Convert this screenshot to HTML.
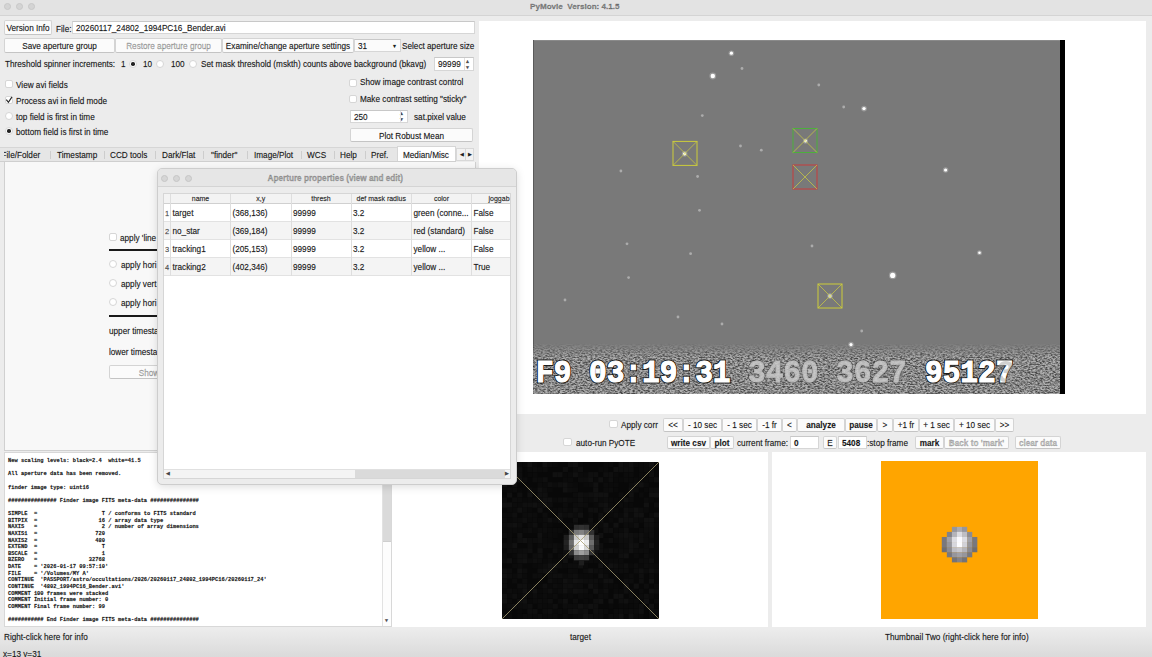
<!DOCTYPE html>
<html><head><meta charset="utf-8">
<style>
*{box-sizing:border-box;margin:0;padding:0}
html,body{width:1152px;height:657px;overflow:hidden;background:#ececec;font-family:"Liberation Sans",sans-serif;font-size:8.2px;color:#1c1c1c;-webkit-text-stroke:0.3px rgba(0,0,0,.4)}
.a{position:absolute}
.t{position:absolute;white-space:nowrap;line-height:13px}
.btn{position:absolute;background:#fbfbfb;border:1px solid #d4d4d4;border-bottom-color:#c4c4c4;border-radius:2px;text-align:center;white-space:nowrap;line-height:15px}
.fld{position:absolute;background:#fff;border:1px solid #d6d6d6;border-top-color:#c8c8c8;white-space:nowrap}
.cb{position:absolute;width:8px;height:8px;background:#fff;border:1px solid #d6d6d6;border-radius:2px}
.rb{position:absolute;width:8px;height:8px;background:#fff;border:1px solid #d6d6d6;border-radius:50%}
.rb.on::after{content:"";position:absolute;left:1.25px;top:1.25px;width:3.5px;height:3.5px;border-radius:50%;background:#222}
.dis{color:#c8c8c8}
.b{font-weight:bold}
</style></head><body>

<div class="a" style="left:0;top:629px;width:1152px;height:28px;background:linear-gradient(#ececec,#dadada)"></div>
<!-- title bar -->
<div class="a" style="left:0;top:0;width:1152px;height:16px;background:#e3e3e3;border-bottom:1px solid #d4d4d4"></div>
<div class="a" style="left:3.8px;top:2.8px;width:7px;height:7px;border-radius:50%;background:#d4d4d4;border:1px solid #c8c8c8"></div>
<div class="a" style="left:15.7px;top:2.8px;width:7px;height:7px;border-radius:50%;background:#d4d4d4;border:1px solid #c8c8c8"></div>
<div class="a" style="left:27.7px;top:2.8px;width:7px;height:7px;border-radius:50%;background:#d4d4d4;border:1px solid #c8c8c8"></div>
<div class="t b" style="left:530px;top:-0.2px;color:#8c8c8c;font-size:8.1px">PyMovie&nbsp; Version: 4.1.5</div>

<!-- LEFT PANEL -->
<div class="btn" style="left:4px;top:20px;width:48px;height:15px">Version Info</div>
<div class="t" style="left:56px;top:23px">File:</div>
<div class="fld" style="left:72px;top:21px;width:403px;height:13px;padding-left:3px;line-height:13px">20260117_24802_1994PC16_Bender.avi</div>

<div class="btn" style="left:4px;top:38px;width:111px;height:15px">Save aperture group</div>
<div class="btn dis" style="left:115px;top:38px;width:107px;height:15px">Restore aperture group</div>
<div class="btn" style="left:222px;top:38px;width:132px;height:15px">Examine/change aperture settings</div>
<div class="fld" style="left:354px;top:39px;width:47px;height:13px;padding-left:3px;line-height:13px;background:#fbfbfb">31<span class="a" style="left:38px;top:0;font-size:6px;line-height:12px">&#9662;</span></div>
<div class="t" style="left:402px;top:40px">Select aperture size</div>

<div class="t" style="left:5px;top:58px">Threshold spinner increments:</div>
<div class="t" style="left:121px;top:58px">1</div>
<div class="rb on" style="left:129px;top:60px"></div>
<div class="t" style="left:143px;top:58px">10</div>
<div class="rb" style="left:156px;top:60px"></div>
<div class="t" style="left:171px;top:58px">100</div>
<div class="rb" style="left:189px;top:60px"></div>
<div class="t" style="left:201px;top:58px">Set mask threshold (mskth) counts above background (bkavg)</div>
<div class="fld" style="left:434px;top:57px;width:40px;height:14px;padding-left:3px;line-height:13.5px">99999<span class="a" style="left:30px;top:0;font-size:5px;line-height:6px;color:#555">&#9650;<br>&#9660;</span></div>

<div class="cb" style="left:5px;top:80px"></div>
<div class="t" style="left:16px;top:79px">View avi fields</div>
<div class="cb" style="left:5px;top:96px"></div>
<svg class="a" style="left:4px;top:94px" width="10" height="10"><path d="M2.3 5.6L4.4 8.3L8 2.8" fill="none" stroke="#2a2a2a" stroke-width="1.2"/></svg>
<div class="t" style="left:16px;top:95px">Process avi in field mode</div>
<div class="rb" style="left:5px;top:112px"></div>
<div class="t" style="left:16px;top:111px">top field is first in time</div>
<div class="rb on" style="left:5px;top:127px"></div>
<div class="t" style="left:16px;top:126px">bottom field is first in time</div>

<div class="cb" style="left:349px;top:79px"></div>
<div class="t" style="left:360px;top:76px">Show image contrast control</div>
<div class="cb" style="left:349px;top:95px"></div>
<div class="t" style="left:360px;top:93px">Make contrast setting "sticky"</div>
<div class="fld" style="left:350px;top:110px;width:58px;height:13px;padding-left:3px;line-height:14px">250<span class="a" style="left:48px;top:0;font-size:5px;line-height:5.5px;color:#555">&#9650;<br>&#9660;</span></div>
<div class="t" style="left:414px;top:110.5px">sat.pixel value</div>
<div class="btn" style="left:350px;top:128px;width:123px;height:14px">Plot Robust Mean</div>

<div class="a" style="left:400px;top:111px;width:1px;height:11px;background:#e0e0e0"></div>
<div class="a" style="left:464px;top:58px;width:1px;height:12px;background:#e0e0e0"></div>
<!-- tabs -->
<div class="a" style="left:0;top:147px;width:456px;height:14.5px;background:#e6e6e6;border-top:1px solid #d6d6d6;border-bottom:1px solid #cfcfcf"></div>
<div class="a" style="left:4px;top:148px;width:46px;height:13px;overflow:hidden"><div class="t" style="left:-2.5px;top:1.4px">File/Folder</div></div>
<div class="t" style="left:57px;top:149.4px">Timestamp</div>
<div class="t" style="left:110px;top:149.4px">CCD tools</div>
<div class="t" style="left:162px;top:149.4px">Dark/Flat</div>
<div class="t" style="left:211px;top:149.4px">"finder"</div>
<div class="t" style="left:254px;top:149.4px">Image/Plot</div>
<div class="t" style="left:307px;top:149.4px">WCS</div>
<div class="t" style="left:340px;top:149.4px">Help</div>
<div class="t" style="left:371px;top:149.4px">Pref.</div>
<div class="a" style="left:50px;top:151px;width:1px;height:8px;background:#cdcdcd"></div>
<div class="a" style="left:104px;top:151px;width:1px;height:8px;background:#cdcdcd"></div>
<div class="a" style="left:155px;top:151px;width:1px;height:8px;background:#cdcdcd"></div>
<div class="a" style="left:203px;top:151px;width:1px;height:8px;background:#cdcdcd"></div>
<div class="a" style="left:247px;top:151px;width:1px;height:8px;background:#cdcdcd"></div>
<div class="a" style="left:301px;top:151px;width:1px;height:8px;background:#cdcdcd"></div>
<div class="a" style="left:334px;top:151px;width:1px;height:8px;background:#cdcdcd"></div>
<div class="a" style="left:365px;top:151px;width:1px;height:8px;background:#cdcdcd"></div>
<div class="a" style="left:397px;top:146px;width:59px;height:15px;background:#fff;border:1px solid #d6d6d6;border-bottom:none"></div>
<div class="t" style="left:403px;top:148.6px">Median/Misc</div>
<div class="a" style="left:456px;top:148px;width:18px;height:13px;background:#f2f2f2;border:1px solid #d8d8d8"></div><div class="a" style="left:465px;top:149px;width:1px;height:11px;background:#d8d8d8"></div>
<div class="t" style="left:460px;top:148px;font-size:4.5px">&#9664;</div>
<div class="t" style="left:468px;top:148px;font-size:4.5px">&#9654;</div>

<!-- tab pane -->
<div class="a" style="left:4px;top:161.5px;width:472px;height:289px;background:#f8f8f8;border:1px solid #d0d0d0;border-top:none"></div>
<div class="cb" style="left:109px;top:233px"></div>
<div class="t" style="left:120px;top:232px">apply 'line</div>
<div class="a" style="left:109px;top:249px;width:60px;height:2px;background:#1a1a1a"></div>
<div class="rb" style="left:109px;top:260px"></div>
<div class="t" style="left:121px;top:259px">apply hori</div>
<div class="rb" style="left:109px;top:279px"></div>
<div class="t" style="left:121px;top:278px">apply vert</div>
<div class="rb" style="left:109px;top:298px"></div>
<div class="t" style="left:121px;top:297px">apply hori</div>
<div class="a" style="left:109px;top:315px;width:60px;height:2px;background:#1a1a1a"></div>
<div class="t" style="left:109px;top:325px">upper timestamp</div>
<div class="t" style="left:109px;top:346px">lower timestamp</div>
<div class="btn dis" style="left:109px;top:365px;width:80px;height:14px">Show</div>

<!-- log -->
<div class="a" style="left:4px;top:452px;width:388px;height:175px;background:#fff;border:1px solid #d8d8d8;overflow:hidden">
<pre style="position:absolute;left:3px;top:5px;font-family:'Liberation Mono',monospace;font-weight:bold;font-size:5.4px;line-height:6.62px;color:#1a1a1a">New scaling levels: black=2.4  white=41.5

All aperture data has been removed.

finder image type: uint16

############### Finder image FITS meta-data ###############

SIMPLE  =                    T / conforms to FITS standard
BITPIX  =                   16 / array data type
NAXIS   =                    2 / number of array dimensions
NAXIS1  =                  720
NAXIS2  =                  480
EXTEND  =                    T
BSCALE  =                    1
BZERO   =                32768
DATE    = &#x27;2026-01-17 09:57:10&#x27;
FILE    = &#x27;/Volumes/MY A&#x27;
CONTINUE  &#x27;PASSPORT/astro/occultations/2026/20260117_24802_1994PC16/20260117_24&#x27;
CONTINUE  &#x27;4802_1994PC16_Bender.avi&#x27;
COMMENT 100 frames were stacked
COMMENT Initial frame number: 0
COMMENT Final frame number: 99

########### End Finder image FITS meta-data ###############</pre>
<div class="a" style="left:377px;top:0;width:10px;height:173px;background:#fdfdfd;border-left:1px solid #e2e2e2;border-right:1px solid #e2e2e2"></div>
<div class="a" style="left:378px;top:0px;width:8px;height:89px;background:#dadada;border-bottom:1px solid #cfcfcf"></div>
<div class="a" style="left:379px;top:165px;font-size:5px;line-height:5px;color:#555">&#9660;</div>
</div>

<div class="t" style="left:4px;top:631px">Right-click here for info</div>
<div class="t" style="left:3px;top:648px">x=13 y=31</div>

<!-- RIGHT PANEL -->
<div class="a" style="left:479px;top:20.5px;width:667px;height:393px;background:#fff"></div>
<div class="a" style="left:533px;top:40px;width:532px;height:354px;background:#000">
<svg width="532" height="354" style="position:absolute;left:0;top:0">
<defs>
<filter id="nz" x="0" y="0" width="100%" height="100%" color-interpolation-filters="sRGB">
<feTurbulence type="fractalNoise" baseFrequency="0.4 0.75" numOctaves="3" seed="7"/>
<feColorMatrix type="matrix" values="2.4 0 0 0 -0.6  2.4 0 0 0 -0.6  2.4 0 0 0 -0.6  0 0 0 0 1"/>
</filter>
<linearGradient id="bandg" x1="0" y1="0" x2="0" y2="1"><stop offset="0" stop-color="#fff" stop-opacity="0"/><stop offset="0.3" stop-color="#fff" stop-opacity="1"/></linearGradient>
<mask id="bandm"><rect x="0" y="303" width="527" height="51" fill="url(#bandg)"/></mask>
</defs>
<rect x="0" y="0" width="527" height="354" fill="#797979"/><rect x="0" y="0" width="527" height="1" fill="#8a8a8a"/><rect x="0" y="0" width="1" height="354" fill="#5a5a5a"/>
<g mask="url(#bandm)"><rect x="0" y="303" width="527" height="51" fill="#fff" filter="url(#nz)" opacity=".42"/></g>
<circle cx="179.8" cy="36.0" r="3.4" fill="#bbb" opacity=".5"/><circle cx="179.8" cy="36.0" r="2.2" fill="#fff"/>
<circle cx="198.4" cy="13.2" r="2.8" fill="#bbb" opacity=".5"/><circle cx="198.4" cy="13.2" r="1.6" fill="#fff"/>
<circle cx="331.0" cy="68.6" r="2.9" fill="#bbb" opacity=".5"/><circle cx="331.0" cy="68.6" r="1.7" fill="#fff"/>
<circle cx="412.6" cy="130.0" r="2.8" fill="#bbb" opacity=".5"/><circle cx="412.6" cy="130.0" r="1.6" fill="#fff"/>
<circle cx="359.7" cy="235.4" r="3.8" fill="#bbb" opacity=".5"/><circle cx="359.7" cy="235.4" r="2.6" fill="#fff"/>
<circle cx="318.0" cy="304.6" r="2.8" fill="#bbb" opacity=".5"/><circle cx="318.0" cy="304.6" r="1.6" fill="#fff"/>
<circle cx="151.6" cy="113.8" r="2.8" fill="#bbb" opacity=".5"/><circle cx="151.6" cy="113.8" r="1.6" fill="#fff"/>
<circle cx="272.5" cy="101.0" r="2.6" fill="#bbb" opacity=".5"/><circle cx="272.5" cy="101.0" r="1.4" fill="#fff"/>
<circle cx="297.0" cy="256.0" r="2.7" fill="#bbb" opacity=".5"/><circle cx="297.0" cy="256.0" r="1.5" fill="#fff"/>
<circle cx="446.5" cy="212.8" r="2.5" fill="#bbb" opacity=".5"/><circle cx="446.5" cy="212.8" r="1.3" fill="#fff"/>
<circle cx="209.0" cy="28.5" r="1.4" fill="#acacac"/>
<circle cx="169.3" cy="75.6" r="1.4" fill="#acacac"/>
<circle cx="164.6" cy="136.5" r="1.4" fill="#acacac"/>
<circle cx="228.3" cy="110.2" r="1.4" fill="#acacac"/>
<circle cx="87.9" cy="131.0" r="1.4" fill="#acacac"/>
<circle cx="166.5" cy="170.3" r="1.4" fill="#acacac"/>
<circle cx="310.7" cy="67.0" r="1.4" fill="#acacac"/>
<circle cx="285.8" cy="45.0" r="1.4" fill="#acacac"/>
<circle cx="157.6" cy="213.7" r="1.4" fill="#acacac"/>
<circle cx="95.6" cy="237.6" r="1.4" fill="#acacac"/>
<circle cx="94.0" cy="203.8" r="1.4" fill="#acacac"/>
<circle cx="32.0" cy="260.0" r="1.4" fill="#acacac"/>
<circle cx="145.0" cy="277.0" r="1.4" fill="#acacac"/>
<circle cx="189.0" cy="284.0" r="1.4" fill="#acacac"/>
<circle cx="328.7" cy="291.0" r="1.4" fill="#acacac"/>
<circle cx="279.0" cy="206.0" r="1.4" fill="#acacac"/>
<circle cx="207.5" cy="106.0" r="1.4" fill="#acacac"/>
<rect x="140.0" y="101.4" width="24" height="24" fill="none" stroke="#cdcd3a" stroke-width="1"/><path d="M140.0 101.4L164.0 125.4M164.0 101.4L140.0 125.4" stroke="#d2d23c" stroke-width=".8" opacity=".85"/>
<rect x="260.0" y="88.5" width="24" height="24" fill="none" stroke="#4caf3c" stroke-width="1"/><path d="M260.0 88.5L284.0 112.5M284.0 88.5L260.0 112.5" stroke="#d2d23c" stroke-width=".8" opacity=".85"/>
<rect x="260.0" y="125.0" width="24" height="24" fill="none" stroke="#c83c3c" stroke-width="1"/><path d="M260.0 125.0L284.0 149.0M284.0 125.0L260.0 149.0" stroke="#d2d23c" stroke-width=".8" opacity=".85"/>
<rect x="285.0" y="244.0" width="24" height="24" fill="none" stroke="#cdcd3a" stroke-width="1"/><path d="M285.0 244.0L309.0 268.0M309.0 244.0L285.0 268.0" stroke="#d2d23c" stroke-width=".8" opacity=".85"/>
<g font-family="Liberation Mono" font-weight="bold" font-size="29.5" transform="translate(0,342.4) scale(1,1.07)">
<g fill="none" stroke="#111" stroke-width="3" opacity=".9"><text x="3" y="0">F9</text><text x="56" y="0">03:19:31</text><text x="392" y="0">95127</text></g>
<g fill="#fff" stroke="#fff" stroke-width="1.1"><text x="3" y="0">F9</text><text x="56" y="0">03:19:31</text><text x="392" y="0">95127</text></g>
<g fill="none" stroke="#333" stroke-width="2.6" opacity=".35"><text x="215" y="0">3460</text><text x="303" y="0">3627</text></g><g fill="#d2d2d2" stroke="#d2d2d2" stroke-width=".8" opacity=".8"><text x="215" y="0">3460</text><text x="303" y="0">3627</text></g><text x="464" y="0" fill="#999" opacity=".45">3</text>
</g>
</svg>
</div>


<!-- controls -->

<div class="cb" style="left:609px;top:420px;width:9px"></div>
<div class="t" style="left:621px;top:418.7px">Apply corr</div>
<div class="btn" style="left:663px;top:418px;width:20px;height:14px;line-height:13px">&lt;&lt;</div>
<div class="btn" style="left:683px;top:418px;width:39px;height:14px;line-height:13px">- 10 sec</div>
<div class="btn" style="left:722px;top:418px;width:35px;height:14px;line-height:13px">- 1 sec</div>
<div class="btn" style="left:757px;top:418px;width:25px;height:14px;line-height:13px">-1 fr</div>
<div class="btn" style="left:782px;top:418px;width:15px;height:14px;line-height:13px">&lt;</div>
<div class="btn b" style="left:797px;top:418px;width:48px;height:14px;line-height:13px">analyze</div>
<div class="btn b" style="left:845px;top:418px;width:32px;height:14px;line-height:13px">pause</div>
<div class="btn" style="left:877px;top:418px;width:16px;height:14px;line-height:13px">&gt;</div>
<div class="btn" style="left:893px;top:418px;width:26px;height:14px;line-height:13px">+1 fr</div>
<div class="btn" style="left:919px;top:418px;width:35px;height:14px;line-height:13px">+ 1 sec</div>
<div class="btn" style="left:954px;top:418px;width:41px;height:14px;line-height:13px">+ 10 sec</div>
<div class="btn" style="left:995px;top:418px;width:19px;height:14px;line-height:13px">&gt;&gt;</div>

<div class="cb" style="left:563px;top:438px;width:9px"></div>
<div class="t" style="left:576px;top:436.8px">auto-run PyOTE</div>
<div class="btn b" style="left:667px;top:436px;width:43px;height:13px;line-height:13.5px">write csv</div>
<div class="btn b" style="left:710px;top:436px;width:24px;height:13px;line-height:13.5px">plot</div>
<div class="t" style="left:737px;top:436.8px">current frame:</div>
<div class="fld b" style="left:790px;top:436px;width:29px;height:13px;padding-left:3px;line-height:13.5px">0</div>
<div class="btn" style="left:823px;top:436px;width:14px;height:13px;line-height:13.5px">E</div>
<div class="fld b" style="left:838px;top:436px;width:29px;height:13px;padding-left:3px;line-height:13.5px">5408</div>
<div class="t" style="left:867px;top:436.8px">:stop frame</div>
<div class="btn b" style="left:915px;top:436px;width:29px;height:13px;line-height:13.5px">mark</div>
<div class="btn b dis" style="left:944px;top:436px;width:65px;height:13px;line-height:13.5px">Back to 'mark'</div>
<div class="btn b dis" style="left:1015px;top:436px;width:46px;height:13px;line-height:13.5px">clear data</div>

<!-- thumbnails -->
<div class="a" style="left:392px;top:451.5px;width:376px;height:175.5px;background:#fff"></div>
<div class="a" style="left:772px;top:451.5px;width:374px;height:175.5px;background:#fff"></div>
<div class="a" style="left:502px;top:462px;width:157px;height:157px;background:#080808;overflow:hidden">
<svg width="157" height="157" style="position:absolute;left:0;top:0"><g style="filter:blur(.5px)"><rect x="0.00" y="0.00" width="5.16" height="5.16" fill="rgb(17,17,17)"/><rect x="5.06" y="0.00" width="5.16" height="5.16" fill="rgb(17,17,17)"/><rect x="10.13" y="0.00" width="5.16" height="5.16" fill="rgb(17,17,17)"/><rect x="15.19" y="0.00" width="5.16" height="5.16" fill="rgb(11,11,11)"/><rect x="20.26" y="0.00" width="5.16" height="5.16" fill="rgb(10,10,10)"/><rect x="25.32" y="0.00" width="5.16" height="5.16" fill="rgb(17,17,17)"/><rect x="30.39" y="0.00" width="5.16" height="5.16" fill="rgb(10,10,10)"/><rect x="40.52" y="0.00" width="5.16" height="5.16" fill="rgb(17,17,17)"/><rect x="45.58" y="0.00" width="5.16" height="5.16" fill="rgb(12,12,12)"/><rect x="50.65" y="0.00" width="5.16" height="5.16" fill="rgb(10,10,10)"/><rect x="65.84" y="0.00" width="5.16" height="5.16" fill="rgb(15,15,15)"/><rect x="70.90" y="0.00" width="5.16" height="5.16" fill="rgb(17,17,17)"/><rect x="75.97" y="0.00" width="5.16" height="5.16" fill="rgb(10,10,10)"/><rect x="101.29" y="0.00" width="5.16" height="5.16" fill="rgb(11,11,11)"/><rect x="106.35" y="0.00" width="5.16" height="5.16" fill="rgb(11,11,11)"/><rect x="116.48" y="0.00" width="5.16" height="5.16" fill="rgb(17,17,17)"/><rect x="121.55" y="0.00" width="5.16" height="5.16" fill="rgb(13,13,13)"/><rect x="126.61" y="0.00" width="5.16" height="5.16" fill="rgb(17,17,17)"/><rect x="131.68" y="0.00" width="5.16" height="5.16" fill="rgb(11,11,11)"/><rect x="136.74" y="0.00" width="5.16" height="5.16" fill="rgb(11,11,11)"/><rect x="141.81" y="0.00" width="5.16" height="5.16" fill="rgb(12,12,12)"/><rect x="146.87" y="0.00" width="5.16" height="5.16" fill="rgb(17,17,17)"/><rect x="5.06" y="5.06" width="5.16" height="5.16" fill="rgb(17,17,17)"/><rect x="10.13" y="5.06" width="5.16" height="5.16" fill="rgb(12,12,12)"/><rect x="15.19" y="5.06" width="5.16" height="5.16" fill="rgb(15,15,15)"/><rect x="25.32" y="5.06" width="5.16" height="5.16" fill="rgb(12,12,12)"/><rect x="30.39" y="5.06" width="5.16" height="5.16" fill="rgb(13,13,13)"/><rect x="35.45" y="5.06" width="5.16" height="5.16" fill="rgb(11,11,11)"/><rect x="40.52" y="5.06" width="5.16" height="5.16" fill="rgb(12,12,12)"/><rect x="60.77" y="5.06" width="5.16" height="5.16" fill="rgb(15,15,15)"/><rect x="70.90" y="5.06" width="5.16" height="5.16" fill="rgb(12,12,12)"/><rect x="75.97" y="5.06" width="5.16" height="5.16" fill="rgb(15,15,15)"/><rect x="96.23" y="5.06" width="5.16" height="5.16" fill="rgb(11,11,11)"/><rect x="101.29" y="5.06" width="5.16" height="5.16" fill="rgb(11,11,11)"/><rect x="111.42" y="5.06" width="5.16" height="5.16" fill="rgb(17,17,17)"/><rect x="116.48" y="5.06" width="5.16" height="5.16" fill="rgb(15,15,15)"/><rect x="121.55" y="5.06" width="5.16" height="5.16" fill="rgb(15,15,15)"/><rect x="126.61" y="5.06" width="5.16" height="5.16" fill="rgb(15,15,15)"/><rect x="136.74" y="5.06" width="5.16" height="5.16" fill="rgb(11,11,11)"/><rect x="141.81" y="5.06" width="5.16" height="5.16" fill="rgb(12,12,12)"/><rect x="146.87" y="5.06" width="5.16" height="5.16" fill="rgb(13,13,13)"/><rect x="0.00" y="10.13" width="5.16" height="5.16" fill="rgb(12,12,12)"/><rect x="5.06" y="10.13" width="5.16" height="5.16" fill="rgb(13,13,13)"/><rect x="15.19" y="10.13" width="5.16" height="5.16" fill="rgb(15,15,15)"/><rect x="25.32" y="10.13" width="5.16" height="5.16" fill="rgb(10,10,10)"/><rect x="30.39" y="10.13" width="5.16" height="5.16" fill="rgb(11,11,11)"/><rect x="50.65" y="10.13" width="5.16" height="5.16" fill="rgb(17,17,17)"/><rect x="55.71" y="10.13" width="5.16" height="5.16" fill="rgb(17,17,17)"/><rect x="60.77" y="10.13" width="5.16" height="5.16" fill="rgb(10,10,10)"/><rect x="65.84" y="10.13" width="5.16" height="5.16" fill="rgb(11,11,11)"/><rect x="70.90" y="10.13" width="5.16" height="5.16" fill="rgb(17,17,17)"/><rect x="75.97" y="10.13" width="5.16" height="5.16" fill="rgb(11,11,11)"/><rect x="81.03" y="10.13" width="5.16" height="5.16" fill="rgb(10,10,10)"/><rect x="86.10" y="10.13" width="5.16" height="5.16" fill="rgb(15,15,15)"/><rect x="91.16" y="10.13" width="5.16" height="5.16" fill="rgb(15,15,15)"/><rect x="101.29" y="10.13" width="5.16" height="5.16" fill="rgb(15,15,15)"/><rect x="106.35" y="10.13" width="5.16" height="5.16" fill="rgb(15,15,15)"/><rect x="111.42" y="10.13" width="5.16" height="5.16" fill="rgb(11,11,11)"/><rect x="121.55" y="10.13" width="5.16" height="5.16" fill="rgb(12,12,12)"/><rect x="126.61" y="10.13" width="5.16" height="5.16" fill="rgb(12,12,12)"/><rect x="136.74" y="10.13" width="5.16" height="5.16" fill="rgb(11,11,11)"/><rect x="141.81" y="10.13" width="5.16" height="5.16" fill="rgb(10,10,10)"/><rect x="146.87" y="10.13" width="5.16" height="5.16" fill="rgb(15,15,15)"/><rect x="5.06" y="15.19" width="5.16" height="5.16" fill="rgb(10,10,10)"/><rect x="10.13" y="15.19" width="5.16" height="5.16" fill="rgb(11,11,11)"/><rect x="15.19" y="15.19" width="5.16" height="5.16" fill="rgb(17,17,17)"/><rect x="20.26" y="15.19" width="5.16" height="5.16" fill="rgb(12,12,12)"/><rect x="30.39" y="15.19" width="5.16" height="5.16" fill="rgb(13,13,13)"/><rect x="35.45" y="15.19" width="5.16" height="5.16" fill="rgb(12,12,12)"/><rect x="40.52" y="15.19" width="5.16" height="5.16" fill="rgb(15,15,15)"/><rect x="60.77" y="15.19" width="5.16" height="5.16" fill="rgb(11,11,11)"/><rect x="65.84" y="15.19" width="5.16" height="5.16" fill="rgb(11,11,11)"/><rect x="75.97" y="15.19" width="5.16" height="5.16" fill="rgb(13,13,13)"/><rect x="81.03" y="15.19" width="5.16" height="5.16" fill="rgb(13,13,13)"/><rect x="86.10" y="15.19" width="5.16" height="5.16" fill="rgb(17,17,17)"/><rect x="91.16" y="15.19" width="5.16" height="5.16" fill="rgb(10,10,10)"/><rect x="96.23" y="15.19" width="5.16" height="5.16" fill="rgb(17,17,17)"/><rect x="101.29" y="15.19" width="5.16" height="5.16" fill="rgb(10,10,10)"/><rect x="106.35" y="15.19" width="5.16" height="5.16" fill="rgb(15,15,15)"/><rect x="111.42" y="15.19" width="5.16" height="5.16" fill="rgb(10,10,10)"/><rect x="116.48" y="15.19" width="5.16" height="5.16" fill="rgb(10,10,10)"/><rect x="121.55" y="15.19" width="5.16" height="5.16" fill="rgb(12,12,12)"/><rect x="126.61" y="15.19" width="5.16" height="5.16" fill="rgb(11,11,11)"/><rect x="131.68" y="15.19" width="5.16" height="5.16" fill="rgb(11,11,11)"/><rect x="136.74" y="15.19" width="5.16" height="5.16" fill="rgb(11,11,11)"/><rect x="141.81" y="15.19" width="5.16" height="5.16" fill="rgb(10,10,10)"/><rect x="146.87" y="15.19" width="5.16" height="5.16" fill="rgb(11,11,11)"/><rect x="151.94" y="15.19" width="5.16" height="5.16" fill="rgb(15,15,15)"/><rect x="0.00" y="20.26" width="5.16" height="5.16" fill="rgb(17,17,17)"/><rect x="10.13" y="20.26" width="5.16" height="5.16" fill="rgb(15,15,15)"/><rect x="35.45" y="20.26" width="5.16" height="5.16" fill="rgb(12,12,12)"/><rect x="40.52" y="20.26" width="5.16" height="5.16" fill="rgb(11,11,11)"/><rect x="45.58" y="20.26" width="5.16" height="5.16" fill="rgb(15,15,15)"/><rect x="50.65" y="20.26" width="5.16" height="5.16" fill="rgb(12,12,12)"/><rect x="55.71" y="20.26" width="5.16" height="5.16" fill="rgb(15,15,15)"/><rect x="60.77" y="20.26" width="5.16" height="5.16" fill="rgb(17,17,17)"/><rect x="65.84" y="20.26" width="5.16" height="5.16" fill="rgb(12,12,12)"/><rect x="70.90" y="20.26" width="5.16" height="5.16" fill="rgb(10,10,10)"/><rect x="81.03" y="20.26" width="5.16" height="5.16" fill="rgb(10,10,10)"/><rect x="86.10" y="20.26" width="5.16" height="5.16" fill="rgb(11,11,11)"/><rect x="91.16" y="20.26" width="5.16" height="5.16" fill="rgb(17,17,17)"/><rect x="101.29" y="20.26" width="5.16" height="5.16" fill="rgb(12,12,12)"/><rect x="106.35" y="20.26" width="5.16" height="5.16" fill="rgb(11,11,11)"/><rect x="111.42" y="20.26" width="5.16" height="5.16" fill="rgb(11,11,11)"/><rect x="126.61" y="20.26" width="5.16" height="5.16" fill="rgb(12,12,12)"/><rect x="131.68" y="20.26" width="5.16" height="5.16" fill="rgb(15,15,15)"/><rect x="136.74" y="20.26" width="5.16" height="5.16" fill="rgb(17,17,17)"/><rect x="141.81" y="20.26" width="5.16" height="5.16" fill="rgb(11,11,11)"/><rect x="0.00" y="25.32" width="5.16" height="5.16" fill="rgb(10,10,10)"/><rect x="5.06" y="25.32" width="5.16" height="5.16" fill="rgb(12,12,12)"/><rect x="10.13" y="25.32" width="5.16" height="5.16" fill="rgb(13,13,13)"/><rect x="15.19" y="25.32" width="5.16" height="5.16" fill="rgb(10,10,10)"/><rect x="25.32" y="25.32" width="5.16" height="5.16" fill="rgb(13,13,13)"/><rect x="30.39" y="25.32" width="5.16" height="5.16" fill="rgb(10,10,10)"/><rect x="35.45" y="25.32" width="5.16" height="5.16" fill="rgb(17,17,17)"/><rect x="40.52" y="25.32" width="5.16" height="5.16" fill="rgb(13,13,13)"/><rect x="45.58" y="25.32" width="5.16" height="5.16" fill="rgb(10,10,10)"/><rect x="60.77" y="25.32" width="5.16" height="5.16" fill="rgb(17,17,17)"/><rect x="65.84" y="25.32" width="5.16" height="5.16" fill="rgb(13,13,13)"/><rect x="70.90" y="25.32" width="5.16" height="5.16" fill="rgb(12,12,12)"/><rect x="91.16" y="25.32" width="5.16" height="5.16" fill="rgb(17,17,17)"/><rect x="101.29" y="25.32" width="5.16" height="5.16" fill="rgb(12,12,12)"/><rect x="106.35" y="25.32" width="5.16" height="5.16" fill="rgb(13,13,13)"/><rect x="111.42" y="25.32" width="5.16" height="5.16" fill="rgb(10,10,10)"/><rect x="126.61" y="25.32" width="5.16" height="5.16" fill="rgb(17,17,17)"/><rect x="131.68" y="25.32" width="5.16" height="5.16" fill="rgb(13,13,13)"/><rect x="141.81" y="25.32" width="5.16" height="5.16" fill="rgb(10,10,10)"/><rect x="146.87" y="25.32" width="5.16" height="5.16" fill="rgb(13,13,13)"/><rect x="151.94" y="25.32" width="5.16" height="5.16" fill="rgb(13,13,13)"/><rect x="5.06" y="30.39" width="5.16" height="5.16" fill="rgb(17,17,17)"/><rect x="15.19" y="30.39" width="5.16" height="5.16" fill="rgb(15,15,15)"/><rect x="25.32" y="30.39" width="5.16" height="5.16" fill="rgb(17,17,17)"/><rect x="35.45" y="30.39" width="5.16" height="5.16" fill="rgb(15,15,15)"/><rect x="40.52" y="30.39" width="5.16" height="5.16" fill="rgb(15,15,15)"/><rect x="70.90" y="30.39" width="5.16" height="5.16" fill="rgb(12,12,12)"/><rect x="75.97" y="30.39" width="5.16" height="5.16" fill="rgb(15,15,15)"/><rect x="81.03" y="30.39" width="5.16" height="5.16" fill="rgb(13,13,13)"/><rect x="86.10" y="30.39" width="5.16" height="5.16" fill="rgb(15,15,15)"/><rect x="91.16" y="30.39" width="5.16" height="5.16" fill="rgb(17,17,17)"/><rect x="96.23" y="30.39" width="5.16" height="5.16" fill="rgb(17,17,17)"/><rect x="101.29" y="30.39" width="5.16" height="5.16" fill="rgb(17,17,17)"/><rect x="116.48" y="30.39" width="5.16" height="5.16" fill="rgb(12,12,12)"/><rect x="126.61" y="30.39" width="5.16" height="5.16" fill="rgb(17,17,17)"/><rect x="136.74" y="30.39" width="5.16" height="5.16" fill="rgb(11,11,11)"/><rect x="146.87" y="30.39" width="5.16" height="5.16" fill="rgb(17,17,17)"/><rect x="151.94" y="30.39" width="5.16" height="5.16" fill="rgb(17,17,17)"/><rect x="0.00" y="35.45" width="5.16" height="5.16" fill="rgb(12,12,12)"/><rect x="10.13" y="35.45" width="5.16" height="5.16" fill="rgb(13,13,13)"/><rect x="15.19" y="35.45" width="5.16" height="5.16" fill="rgb(12,12,12)"/><rect x="20.26" y="35.45" width="5.16" height="5.16" fill="rgb(10,10,10)"/><rect x="25.32" y="35.45" width="5.16" height="5.16" fill="rgb(11,11,11)"/><rect x="30.39" y="35.45" width="5.16" height="5.16" fill="rgb(10,10,10)"/><rect x="35.45" y="35.45" width="5.16" height="5.16" fill="rgb(13,13,13)"/><rect x="40.52" y="35.45" width="5.16" height="5.16" fill="rgb(17,17,17)"/><rect x="45.58" y="35.45" width="5.16" height="5.16" fill="rgb(17,17,17)"/><rect x="50.65" y="35.45" width="5.16" height="5.16" fill="rgb(11,11,11)"/><rect x="55.71" y="35.45" width="5.16" height="5.16" fill="rgb(13,13,13)"/><rect x="60.77" y="35.45" width="5.16" height="5.16" fill="rgb(15,15,15)"/><rect x="65.84" y="35.45" width="5.16" height="5.16" fill="rgb(12,12,12)"/><rect x="70.90" y="35.45" width="5.16" height="5.16" fill="rgb(11,11,11)"/><rect x="75.97" y="35.45" width="5.16" height="5.16" fill="rgb(15,15,15)"/><rect x="81.03" y="35.45" width="5.16" height="5.16" fill="rgb(11,11,11)"/><rect x="86.10" y="35.45" width="5.16" height="5.16" fill="rgb(11,11,11)"/><rect x="91.16" y="35.45" width="5.16" height="5.16" fill="rgb(15,15,15)"/><rect x="96.23" y="35.45" width="5.16" height="5.16" fill="rgb(11,11,11)"/><rect x="101.29" y="35.45" width="5.16" height="5.16" fill="rgb(13,13,13)"/><rect x="106.35" y="35.45" width="5.16" height="5.16" fill="rgb(11,11,11)"/><rect x="111.42" y="35.45" width="5.16" height="5.16" fill="rgb(10,10,10)"/><rect x="116.48" y="35.45" width="5.16" height="5.16" fill="rgb(10,10,10)"/><rect x="121.55" y="35.45" width="5.16" height="5.16" fill="rgb(17,17,17)"/><rect x="126.61" y="35.45" width="5.16" height="5.16" fill="rgb(13,13,13)"/><rect x="141.81" y="35.45" width="5.16" height="5.16" fill="rgb(12,12,12)"/><rect x="146.87" y="35.45" width="5.16" height="5.16" fill="rgb(10,10,10)"/><rect x="0.00" y="40.52" width="5.16" height="5.16" fill="rgb(17,17,17)"/><rect x="5.06" y="40.52" width="5.16" height="5.16" fill="rgb(17,17,17)"/><rect x="10.13" y="40.52" width="5.16" height="5.16" fill="rgb(12,12,12)"/><rect x="15.19" y="40.52" width="5.16" height="5.16" fill="rgb(11,11,11)"/><rect x="20.26" y="40.52" width="5.16" height="5.16" fill="rgb(15,15,15)"/><rect x="25.32" y="40.52" width="5.16" height="5.16" fill="rgb(15,15,15)"/><rect x="30.39" y="40.52" width="5.16" height="5.16" fill="rgb(17,17,17)"/><rect x="35.45" y="40.52" width="5.16" height="5.16" fill="rgb(13,13,13)"/><rect x="40.52" y="40.52" width="5.16" height="5.16" fill="rgb(17,17,17)"/><rect x="45.58" y="40.52" width="5.16" height="5.16" fill="rgb(13,13,13)"/><rect x="60.77" y="40.52" width="5.16" height="5.16" fill="rgb(12,12,12)"/><rect x="70.90" y="40.52" width="5.16" height="5.16" fill="rgb(12,12,12)"/><rect x="75.97" y="40.52" width="5.16" height="5.16" fill="rgb(13,13,13)"/><rect x="81.03" y="40.52" width="5.16" height="5.16" fill="rgb(12,12,12)"/><rect x="91.16" y="40.52" width="5.16" height="5.16" fill="rgb(10,10,10)"/><rect x="96.23" y="40.52" width="5.16" height="5.16" fill="rgb(15,15,15)"/><rect x="101.29" y="40.52" width="5.16" height="5.16" fill="rgb(17,17,17)"/><rect x="106.35" y="40.52" width="5.16" height="5.16" fill="rgb(11,11,11)"/><rect x="116.48" y="40.52" width="5.16" height="5.16" fill="rgb(12,12,12)"/><rect x="121.55" y="40.52" width="5.16" height="5.16" fill="rgb(11,11,11)"/><rect x="126.61" y="40.52" width="5.16" height="5.16" fill="rgb(10,10,10)"/><rect x="141.81" y="40.52" width="5.16" height="5.16" fill="rgb(17,17,17)"/><rect x="151.94" y="40.52" width="5.16" height="5.16" fill="rgb(13,13,13)"/><rect x="5.06" y="45.58" width="5.16" height="5.16" fill="rgb(11,11,11)"/><rect x="10.13" y="45.58" width="5.16" height="5.16" fill="rgb(11,11,11)"/><rect x="15.19" y="45.58" width="5.16" height="5.16" fill="rgb(17,17,17)"/><rect x="20.26" y="45.58" width="5.16" height="5.16" fill="rgb(12,12,12)"/><rect x="25.32" y="45.58" width="5.16" height="5.16" fill="rgb(10,10,10)"/><rect x="35.45" y="45.58" width="5.16" height="5.16" fill="rgb(17,17,17)"/><rect x="45.58" y="45.58" width="5.16" height="5.16" fill="rgb(10,10,10)"/><rect x="50.65" y="45.58" width="5.16" height="5.16" fill="rgb(11,11,11)"/><rect x="55.71" y="45.58" width="5.16" height="5.16" fill="rgb(12,12,12)"/><rect x="60.77" y="45.58" width="5.16" height="5.16" fill="rgb(13,13,13)"/><rect x="65.84" y="45.58" width="5.16" height="5.16" fill="rgb(10,10,10)"/><rect x="70.90" y="45.58" width="5.16" height="5.16" fill="rgb(15,15,15)"/><rect x="75.97" y="45.58" width="5.16" height="5.16" fill="rgb(11,11,11)"/><rect x="86.10" y="45.58" width="5.16" height="5.16" fill="rgb(15,15,15)"/><rect x="91.16" y="45.58" width="5.16" height="5.16" fill="rgb(15,15,15)"/><rect x="96.23" y="45.58" width="5.16" height="5.16" fill="rgb(10,10,10)"/><rect x="101.29" y="45.58" width="5.16" height="5.16" fill="rgb(17,17,17)"/><rect x="106.35" y="45.58" width="5.16" height="5.16" fill="rgb(17,17,17)"/><rect x="111.42" y="45.58" width="5.16" height="5.16" fill="rgb(11,11,11)"/><rect x="121.55" y="45.58" width="5.16" height="5.16" fill="rgb(15,15,15)"/><rect x="126.61" y="45.58" width="5.16" height="5.16" fill="rgb(13,13,13)"/><rect x="131.68" y="45.58" width="5.16" height="5.16" fill="rgb(17,17,17)"/><rect x="136.74" y="45.58" width="5.16" height="5.16" fill="rgb(13,13,13)"/><rect x="141.81" y="45.58" width="5.16" height="5.16" fill="rgb(11,11,11)"/><rect x="0.00" y="50.65" width="5.16" height="5.16" fill="rgb(11,11,11)"/><rect x="5.06" y="50.65" width="5.16" height="5.16" fill="rgb(11,11,11)"/><rect x="10.13" y="50.65" width="5.16" height="5.16" fill="rgb(15,15,15)"/><rect x="20.26" y="50.65" width="5.16" height="5.16" fill="rgb(12,12,12)"/><rect x="25.32" y="50.65" width="5.16" height="5.16" fill="rgb(13,13,13)"/><rect x="30.39" y="50.65" width="5.16" height="5.16" fill="rgb(12,12,12)"/><rect x="40.52" y="50.65" width="5.16" height="5.16" fill="rgb(13,13,13)"/><rect x="55.71" y="50.65" width="5.16" height="5.16" fill="rgb(17,17,17)"/><rect x="60.77" y="50.65" width="5.16" height="5.16" fill="rgb(13,13,13)"/><rect x="65.84" y="50.65" width="5.16" height="5.16" fill="rgb(15,15,15)"/><rect x="70.90" y="50.65" width="5.16" height="5.16" fill="rgb(12,12,12)"/><rect x="75.97" y="50.65" width="5.16" height="5.16" fill="rgb(17,17,17)"/><rect x="86.10" y="50.65" width="5.16" height="5.16" fill="rgb(11,11,11)"/><rect x="96.23" y="50.65" width="5.16" height="5.16" fill="rgb(15,15,15)"/><rect x="106.35" y="50.65" width="5.16" height="5.16" fill="rgb(10,10,10)"/><rect x="111.42" y="50.65" width="5.16" height="5.16" fill="rgb(13,13,13)"/><rect x="116.48" y="50.65" width="5.16" height="5.16" fill="rgb(10,10,10)"/><rect x="121.55" y="50.65" width="5.16" height="5.16" fill="rgb(17,17,17)"/><rect x="126.61" y="50.65" width="5.16" height="5.16" fill="rgb(10,10,10)"/><rect x="131.68" y="50.65" width="5.16" height="5.16" fill="rgb(17,17,17)"/><rect x="136.74" y="50.65" width="5.16" height="5.16" fill="rgb(17,17,17)"/><rect x="146.87" y="50.65" width="5.16" height="5.16" fill="rgb(11,11,11)"/><rect x="151.94" y="50.65" width="5.16" height="5.16" fill="rgb(17,17,17)"/><rect x="0.00" y="55.71" width="5.16" height="5.16" fill="rgb(12,12,12)"/><rect x="5.06" y="55.71" width="5.16" height="5.16" fill="rgb(10,10,10)"/><rect x="10.13" y="55.71" width="5.16" height="5.16" fill="rgb(12,12,12)"/><rect x="15.19" y="55.71" width="5.16" height="5.16" fill="rgb(12,12,12)"/><rect x="20.26" y="55.71" width="5.16" height="5.16" fill="rgb(15,15,15)"/><rect x="25.32" y="55.71" width="5.16" height="5.16" fill="rgb(11,11,11)"/><rect x="30.39" y="55.71" width="5.16" height="5.16" fill="rgb(12,12,12)"/><rect x="35.45" y="55.71" width="5.16" height="5.16" fill="rgb(10,10,10)"/><rect x="40.52" y="55.71" width="5.16" height="5.16" fill="rgb(12,12,12)"/><rect x="45.58" y="55.71" width="5.16" height="5.16" fill="rgb(17,17,17)"/><rect x="50.65" y="55.71" width="5.16" height="5.16" fill="rgb(11,11,11)"/><rect x="55.71" y="55.71" width="5.16" height="5.16" fill="rgb(15,15,15)"/><rect x="70.90" y="55.71" width="5.16" height="5.16" fill="rgb(15,15,15)"/><rect x="86.10" y="55.71" width="5.16" height="5.16" fill="rgb(15,15,15)"/><rect x="96.23" y="55.71" width="5.16" height="5.16" fill="rgb(17,17,17)"/><rect x="106.35" y="55.71" width="5.16" height="5.16" fill="rgb(10,10,10)"/><rect x="116.48" y="55.71" width="5.16" height="5.16" fill="rgb(17,17,17)"/><rect x="121.55" y="55.71" width="5.16" height="5.16" fill="rgb(15,15,15)"/><rect x="126.61" y="55.71" width="5.16" height="5.16" fill="rgb(15,15,15)"/><rect x="131.68" y="55.71" width="5.16" height="5.16" fill="rgb(12,12,12)"/><rect x="136.74" y="55.71" width="5.16" height="5.16" fill="rgb(11,11,11)"/><rect x="141.81" y="55.71" width="5.16" height="5.16" fill="rgb(17,17,17)"/><rect x="146.87" y="55.71" width="5.16" height="5.16" fill="rgb(17,17,17)"/><rect x="151.94" y="55.71" width="5.16" height="5.16" fill="rgb(10,10,10)"/><rect x="0.00" y="60.77" width="5.16" height="5.16" fill="rgb(13,13,13)"/><rect x="5.06" y="60.77" width="5.16" height="5.16" fill="rgb(15,15,15)"/><rect x="10.13" y="60.77" width="5.16" height="5.16" fill="rgb(17,17,17)"/><rect x="15.19" y="60.77" width="5.16" height="5.16" fill="rgb(13,13,13)"/><rect x="25.32" y="60.77" width="5.16" height="5.16" fill="rgb(11,11,11)"/><rect x="30.39" y="60.77" width="5.16" height="5.16" fill="rgb(15,15,15)"/><rect x="40.52" y="60.77" width="5.16" height="5.16" fill="rgb(12,12,12)"/><rect x="45.58" y="60.77" width="5.16" height="5.16" fill="rgb(10,10,10)"/><rect x="60.77" y="60.77" width="5.16" height="5.16" fill="rgb(11,11,11)"/><rect x="65.84" y="60.77" width="5.16" height="5.16" fill="rgb(10,10,10)"/><rect x="70.90" y="60.77" width="5.16" height="5.16" fill="rgb(11,11,11)"/><rect x="81.03" y="60.77" width="5.16" height="5.16" fill="rgb(12,12,12)"/><rect x="86.10" y="60.77" width="5.16" height="5.16" fill="rgb(13,13,13)"/><rect x="91.16" y="60.77" width="5.16" height="5.16" fill="rgb(13,13,13)"/><rect x="96.23" y="60.77" width="5.16" height="5.16" fill="rgb(11,11,11)"/><rect x="101.29" y="60.77" width="5.16" height="5.16" fill="rgb(17,17,17)"/><rect x="111.42" y="60.77" width="5.16" height="5.16" fill="rgb(17,17,17)"/><rect x="121.55" y="60.77" width="5.16" height="5.16" fill="rgb(12,12,12)"/><rect x="126.61" y="60.77" width="5.16" height="5.16" fill="rgb(11,11,11)"/><rect x="131.68" y="60.77" width="5.16" height="5.16" fill="rgb(15,15,15)"/><rect x="141.81" y="60.77" width="5.16" height="5.16" fill="rgb(15,15,15)"/><rect x="146.87" y="60.77" width="5.16" height="5.16" fill="rgb(15,15,15)"/><rect x="151.94" y="60.77" width="5.16" height="5.16" fill="rgb(10,10,10)"/><rect x="0.00" y="65.84" width="5.16" height="5.16" fill="rgb(11,11,11)"/><rect x="5.06" y="65.84" width="5.16" height="5.16" fill="rgb(11,11,11)"/><rect x="10.13" y="65.84" width="5.16" height="5.16" fill="rgb(11,11,11)"/><rect x="15.19" y="65.84" width="5.16" height="5.16" fill="rgb(10,10,10)"/><rect x="20.26" y="65.84" width="5.16" height="5.16" fill="rgb(11,11,11)"/><rect x="25.32" y="65.84" width="5.16" height="5.16" fill="rgb(13,13,13)"/><rect x="30.39" y="65.84" width="5.16" height="5.16" fill="rgb(10,10,10)"/><rect x="35.45" y="65.84" width="5.16" height="5.16" fill="rgb(13,13,13)"/><rect x="40.52" y="65.84" width="5.16" height="5.16" fill="rgb(13,13,13)"/><rect x="45.58" y="65.84" width="5.16" height="5.16" fill="rgb(11,11,11)"/><rect x="50.65" y="65.84" width="5.16" height="5.16" fill="rgb(11,11,11)"/><rect x="55.71" y="65.84" width="5.16" height="5.16" fill="rgb(11,11,11)"/><rect x="65.84" y="65.84" width="5.16" height="5.16" fill="rgb(10,10,10)"/><rect x="70.90" y="65.84" width="5.16" height="5.16" fill="rgb(11,11,11)"/><rect x="75.97" y="65.84" width="5.16" height="5.16" fill="rgb(10,10,10)"/><rect x="86.10" y="65.84" width="5.16" height="5.16" fill="rgb(12,12,12)"/><rect x="91.16" y="65.84" width="5.16" height="5.16" fill="rgb(15,15,15)"/><rect x="101.29" y="65.84" width="5.16" height="5.16" fill="rgb(15,15,15)"/><rect x="106.35" y="65.84" width="5.16" height="5.16" fill="rgb(15,15,15)"/><rect x="111.42" y="65.84" width="5.16" height="5.16" fill="rgb(10,10,10)"/><rect x="116.48" y="65.84" width="5.16" height="5.16" fill="rgb(11,11,11)"/><rect x="121.55" y="65.84" width="5.16" height="5.16" fill="rgb(15,15,15)"/><rect x="136.74" y="65.84" width="5.16" height="5.16" fill="rgb(11,11,11)"/><rect x="141.81" y="65.84" width="5.16" height="5.16" fill="rgb(13,13,13)"/><rect x="146.87" y="65.84" width="5.16" height="5.16" fill="rgb(13,13,13)"/><rect x="0.00" y="70.90" width="5.16" height="5.16" fill="rgb(13,13,13)"/><rect x="5.06" y="70.90" width="5.16" height="5.16" fill="rgb(11,11,11)"/><rect x="15.19" y="70.90" width="5.16" height="5.16" fill="rgb(17,17,17)"/><rect x="35.45" y="70.90" width="5.16" height="5.16" fill="rgb(17,17,17)"/><rect x="40.52" y="70.90" width="5.16" height="5.16" fill="rgb(10,10,10)"/><rect x="45.58" y="70.90" width="5.16" height="5.16" fill="rgb(11,11,11)"/><rect x="50.65" y="70.90" width="5.16" height="5.16" fill="rgb(10,10,10)"/><rect x="60.77" y="70.90" width="5.16" height="5.16" fill="rgb(11,11,11)"/><rect x="65.84" y="70.90" width="5.16" height="5.16" fill="rgb(10,10,10)"/><rect x="70.90" y="70.90" width="5.16" height="5.16" fill="rgb(10,10,10)"/><rect x="75.97" y="70.90" width="5.16" height="5.16" fill="rgb(12,12,12)"/><rect x="91.16" y="70.90" width="5.16" height="5.16" fill="rgb(10,10,10)"/><rect x="96.23" y="70.90" width="5.16" height="5.16" fill="rgb(17,17,17)"/><rect x="111.42" y="70.90" width="5.16" height="5.16" fill="rgb(13,13,13)"/><rect x="116.48" y="70.90" width="5.16" height="5.16" fill="rgb(15,15,15)"/><rect x="121.55" y="70.90" width="5.16" height="5.16" fill="rgb(17,17,17)"/><rect x="126.61" y="70.90" width="5.16" height="5.16" fill="rgb(15,15,15)"/><rect x="131.68" y="70.90" width="5.16" height="5.16" fill="rgb(13,13,13)"/><rect x="136.74" y="70.90" width="5.16" height="5.16" fill="rgb(15,15,15)"/><rect x="141.81" y="70.90" width="5.16" height="5.16" fill="rgb(11,11,11)"/><rect x="146.87" y="70.90" width="5.16" height="5.16" fill="rgb(13,13,13)"/><rect x="5.06" y="75.97" width="5.16" height="5.16" fill="rgb(11,11,11)"/><rect x="10.13" y="75.97" width="5.16" height="5.16" fill="rgb(10,10,10)"/><rect x="15.19" y="75.97" width="5.16" height="5.16" fill="rgb(15,15,15)"/><rect x="20.26" y="75.97" width="5.16" height="5.16" fill="rgb(17,17,17)"/><rect x="25.32" y="75.97" width="5.16" height="5.16" fill="rgb(13,13,13)"/><rect x="30.39" y="75.97" width="5.16" height="5.16" fill="rgb(13,13,13)"/><rect x="35.45" y="75.97" width="5.16" height="5.16" fill="rgb(15,15,15)"/><rect x="40.52" y="75.97" width="5.16" height="5.16" fill="rgb(11,11,11)"/><rect x="45.58" y="75.97" width="5.16" height="5.16" fill="rgb(10,10,10)"/><rect x="60.77" y="75.97" width="5.16" height="5.16" fill="rgb(13,13,13)"/><rect x="70.90" y="75.97" width="5.16" height="5.16" fill="rgb(15,15,15)"/><rect x="75.97" y="75.97" width="5.16" height="5.16" fill="rgb(11,11,11)"/><rect x="81.03" y="75.97" width="5.16" height="5.16" fill="rgb(13,13,13)"/><rect x="86.10" y="75.97" width="5.16" height="5.16" fill="rgb(12,12,12)"/><rect x="91.16" y="75.97" width="5.16" height="5.16" fill="rgb(12,12,12)"/><rect x="101.29" y="75.97" width="5.16" height="5.16" fill="rgb(10,10,10)"/><rect x="106.35" y="75.97" width="5.16" height="5.16" fill="rgb(15,15,15)"/><rect x="111.42" y="75.97" width="5.16" height="5.16" fill="rgb(10,10,10)"/><rect x="116.48" y="75.97" width="5.16" height="5.16" fill="rgb(13,13,13)"/><rect x="121.55" y="75.97" width="5.16" height="5.16" fill="rgb(13,13,13)"/><rect x="126.61" y="75.97" width="5.16" height="5.16" fill="rgb(15,15,15)"/><rect x="131.68" y="75.97" width="5.16" height="5.16" fill="rgb(10,10,10)"/><rect x="136.74" y="75.97" width="5.16" height="5.16" fill="rgb(15,15,15)"/><rect x="141.81" y="75.97" width="5.16" height="5.16" fill="rgb(11,11,11)"/><rect x="146.87" y="75.97" width="5.16" height="5.16" fill="rgb(10,10,10)"/><rect x="0.00" y="81.03" width="5.16" height="5.16" fill="rgb(13,13,13)"/><rect x="5.06" y="81.03" width="5.16" height="5.16" fill="rgb(12,12,12)"/><rect x="10.13" y="81.03" width="5.16" height="5.16" fill="rgb(17,17,17)"/><rect x="25.32" y="81.03" width="5.16" height="5.16" fill="rgb(13,13,13)"/><rect x="35.45" y="81.03" width="5.16" height="5.16" fill="rgb(11,11,11)"/><rect x="40.52" y="81.03" width="5.16" height="5.16" fill="rgb(12,12,12)"/><rect x="45.58" y="81.03" width="5.16" height="5.16" fill="rgb(12,12,12)"/><rect x="50.65" y="81.03" width="5.16" height="5.16" fill="rgb(13,13,13)"/><rect x="55.71" y="81.03" width="5.16" height="5.16" fill="rgb(11,11,11)"/><rect x="60.77" y="81.03" width="5.16" height="5.16" fill="rgb(15,15,15)"/><rect x="65.84" y="81.03" width="5.16" height="5.16" fill="rgb(10,10,10)"/><rect x="75.97" y="81.03" width="5.16" height="5.16" fill="rgb(15,15,15)"/><rect x="81.03" y="81.03" width="5.16" height="5.16" fill="rgb(17,17,17)"/><rect x="86.10" y="81.03" width="5.16" height="5.16" fill="rgb(11,11,11)"/><rect x="96.23" y="81.03" width="5.16" height="5.16" fill="rgb(15,15,15)"/><rect x="116.48" y="81.03" width="5.16" height="5.16" fill="rgb(11,11,11)"/><rect x="121.55" y="81.03" width="5.16" height="5.16" fill="rgb(12,12,12)"/><rect x="126.61" y="81.03" width="5.16" height="5.16" fill="rgb(17,17,17)"/><rect x="131.68" y="81.03" width="5.16" height="5.16" fill="rgb(15,15,15)"/><rect x="141.81" y="81.03" width="5.16" height="5.16" fill="rgb(11,11,11)"/><rect x="146.87" y="81.03" width="5.16" height="5.16" fill="rgb(15,15,15)"/><rect x="5.06" y="86.10" width="5.16" height="5.16" fill="rgb(12,12,12)"/><rect x="10.13" y="86.10" width="5.16" height="5.16" fill="rgb(12,12,12)"/><rect x="15.19" y="86.10" width="5.16" height="5.16" fill="rgb(12,12,12)"/><rect x="20.26" y="86.10" width="5.16" height="5.16" fill="rgb(13,13,13)"/><rect x="25.32" y="86.10" width="5.16" height="5.16" fill="rgb(15,15,15)"/><rect x="35.45" y="86.10" width="5.16" height="5.16" fill="rgb(17,17,17)"/><rect x="50.65" y="86.10" width="5.16" height="5.16" fill="rgb(15,15,15)"/><rect x="55.71" y="86.10" width="5.16" height="5.16" fill="rgb(10,10,10)"/><rect x="60.77" y="86.10" width="5.16" height="5.16" fill="rgb(15,15,15)"/><rect x="65.84" y="86.10" width="5.16" height="5.16" fill="rgb(17,17,17)"/><rect x="70.90" y="86.10" width="5.16" height="5.16" fill="rgb(10,10,10)"/><rect x="75.97" y="86.10" width="5.16" height="5.16" fill="rgb(17,17,17)"/><rect x="86.10" y="86.10" width="5.16" height="5.16" fill="rgb(15,15,15)"/><rect x="91.16" y="86.10" width="5.16" height="5.16" fill="rgb(17,17,17)"/><rect x="96.23" y="86.10" width="5.16" height="5.16" fill="rgb(15,15,15)"/><rect x="101.29" y="86.10" width="5.16" height="5.16" fill="rgb(12,12,12)"/><rect x="106.35" y="86.10" width="5.16" height="5.16" fill="rgb(15,15,15)"/><rect x="111.42" y="86.10" width="5.16" height="5.16" fill="rgb(12,12,12)"/><rect x="116.48" y="86.10" width="5.16" height="5.16" fill="rgb(13,13,13)"/><rect x="121.55" y="86.10" width="5.16" height="5.16" fill="rgb(12,12,12)"/><rect x="126.61" y="86.10" width="5.16" height="5.16" fill="rgb(17,17,17)"/><rect x="131.68" y="86.10" width="5.16" height="5.16" fill="rgb(12,12,12)"/><rect x="136.74" y="86.10" width="5.16" height="5.16" fill="rgb(12,12,12)"/><rect x="141.81" y="86.10" width="5.16" height="5.16" fill="rgb(12,12,12)"/><rect x="0.00" y="91.16" width="5.16" height="5.16" fill="rgb(11,11,11)"/><rect x="10.13" y="91.16" width="5.16" height="5.16" fill="rgb(10,10,10)"/><rect x="15.19" y="91.16" width="5.16" height="5.16" fill="rgb(15,15,15)"/><rect x="20.26" y="91.16" width="5.16" height="5.16" fill="rgb(15,15,15)"/><rect x="30.39" y="91.16" width="5.16" height="5.16" fill="rgb(13,13,13)"/><rect x="35.45" y="91.16" width="5.16" height="5.16" fill="rgb(15,15,15)"/><rect x="45.58" y="91.16" width="5.16" height="5.16" fill="rgb(13,13,13)"/><rect x="55.71" y="91.16" width="5.16" height="5.16" fill="rgb(11,11,11)"/><rect x="60.77" y="91.16" width="5.16" height="5.16" fill="rgb(15,15,15)"/><rect x="65.84" y="91.16" width="5.16" height="5.16" fill="rgb(17,17,17)"/><rect x="70.90" y="91.16" width="5.16" height="5.16" fill="rgb(12,12,12)"/><rect x="75.97" y="91.16" width="5.16" height="5.16" fill="rgb(11,11,11)"/><rect x="91.16" y="91.16" width="5.16" height="5.16" fill="rgb(17,17,17)"/><rect x="96.23" y="91.16" width="5.16" height="5.16" fill="rgb(10,10,10)"/><rect x="101.29" y="91.16" width="5.16" height="5.16" fill="rgb(11,11,11)"/><rect x="116.48" y="91.16" width="5.16" height="5.16" fill="rgb(15,15,15)"/><rect x="121.55" y="91.16" width="5.16" height="5.16" fill="rgb(17,17,17)"/><rect x="131.68" y="91.16" width="5.16" height="5.16" fill="rgb(11,11,11)"/><rect x="141.81" y="91.16" width="5.16" height="5.16" fill="rgb(13,13,13)"/><rect x="146.87" y="91.16" width="5.16" height="5.16" fill="rgb(10,10,10)"/><rect x="0.00" y="96.23" width="5.16" height="5.16" fill="rgb(13,13,13)"/><rect x="5.06" y="96.23" width="5.16" height="5.16" fill="rgb(17,17,17)"/><rect x="10.13" y="96.23" width="5.16" height="5.16" fill="rgb(10,10,10)"/><rect x="15.19" y="96.23" width="5.16" height="5.16" fill="rgb(15,15,15)"/><rect x="20.26" y="96.23" width="5.16" height="5.16" fill="rgb(17,17,17)"/><rect x="25.32" y="96.23" width="5.16" height="5.16" fill="rgb(12,12,12)"/><rect x="30.39" y="96.23" width="5.16" height="5.16" fill="rgb(15,15,15)"/><rect x="35.45" y="96.23" width="5.16" height="5.16" fill="rgb(13,13,13)"/><rect x="40.52" y="96.23" width="5.16" height="5.16" fill="rgb(10,10,10)"/><rect x="45.58" y="96.23" width="5.16" height="5.16" fill="rgb(12,12,12)"/><rect x="50.65" y="96.23" width="5.16" height="5.16" fill="rgb(10,10,10)"/><rect x="55.71" y="96.23" width="5.16" height="5.16" fill="rgb(11,11,11)"/><rect x="60.77" y="96.23" width="5.16" height="5.16" fill="rgb(17,17,17)"/><rect x="70.90" y="96.23" width="5.16" height="5.16" fill="rgb(12,12,12)"/><rect x="75.97" y="96.23" width="5.16" height="5.16" fill="rgb(13,13,13)"/><rect x="81.03" y="96.23" width="5.16" height="5.16" fill="rgb(12,12,12)"/><rect x="86.10" y="96.23" width="5.16" height="5.16" fill="rgb(12,12,12)"/><rect x="91.16" y="96.23" width="5.16" height="5.16" fill="rgb(11,11,11)"/><rect x="96.23" y="96.23" width="5.16" height="5.16" fill="rgb(12,12,12)"/><rect x="101.29" y="96.23" width="5.16" height="5.16" fill="rgb(11,11,11)"/><rect x="106.35" y="96.23" width="5.16" height="5.16" fill="rgb(11,11,11)"/><rect x="111.42" y="96.23" width="5.16" height="5.16" fill="rgb(11,11,11)"/><rect x="116.48" y="96.23" width="5.16" height="5.16" fill="rgb(11,11,11)"/><rect x="136.74" y="96.23" width="5.16" height="5.16" fill="rgb(12,12,12)"/><rect x="141.81" y="96.23" width="5.16" height="5.16" fill="rgb(12,12,12)"/><rect x="146.87" y="96.23" width="5.16" height="5.16" fill="rgb(15,15,15)"/><rect x="10.13" y="101.29" width="5.16" height="5.16" fill="rgb(11,11,11)"/><rect x="15.19" y="101.29" width="5.16" height="5.16" fill="rgb(12,12,12)"/><rect x="30.39" y="101.29" width="5.16" height="5.16" fill="rgb(10,10,10)"/><rect x="35.45" y="101.29" width="5.16" height="5.16" fill="rgb(11,11,11)"/><rect x="40.52" y="101.29" width="5.16" height="5.16" fill="rgb(13,13,13)"/><rect x="45.58" y="101.29" width="5.16" height="5.16" fill="rgb(17,17,17)"/><rect x="50.65" y="101.29" width="5.16" height="5.16" fill="rgb(17,17,17)"/><rect x="55.71" y="101.29" width="5.16" height="5.16" fill="rgb(13,13,13)"/><rect x="60.77" y="101.29" width="5.16" height="5.16" fill="rgb(11,11,11)"/><rect x="65.84" y="101.29" width="5.16" height="5.16" fill="rgb(13,13,13)"/><rect x="70.90" y="101.29" width="5.16" height="5.16" fill="rgb(13,13,13)"/><rect x="75.97" y="101.29" width="5.16" height="5.16" fill="rgb(17,17,17)"/><rect x="81.03" y="101.29" width="5.16" height="5.16" fill="rgb(10,10,10)"/><rect x="96.23" y="101.29" width="5.16" height="5.16" fill="rgb(17,17,17)"/><rect x="101.29" y="101.29" width="5.16" height="5.16" fill="rgb(11,11,11)"/><rect x="106.35" y="101.29" width="5.16" height="5.16" fill="rgb(17,17,17)"/><rect x="111.42" y="101.29" width="5.16" height="5.16" fill="rgb(15,15,15)"/><rect x="116.48" y="101.29" width="5.16" height="5.16" fill="rgb(12,12,12)"/><rect x="121.55" y="101.29" width="5.16" height="5.16" fill="rgb(15,15,15)"/><rect x="126.61" y="101.29" width="5.16" height="5.16" fill="rgb(10,10,10)"/><rect x="131.68" y="101.29" width="5.16" height="5.16" fill="rgb(13,13,13)"/><rect x="136.74" y="101.29" width="5.16" height="5.16" fill="rgb(10,10,10)"/><rect x="141.81" y="101.29" width="5.16" height="5.16" fill="rgb(13,13,13)"/><rect x="146.87" y="101.29" width="5.16" height="5.16" fill="rgb(12,12,12)"/><rect x="151.94" y="101.29" width="5.16" height="5.16" fill="rgb(10,10,10)"/><rect x="0.00" y="106.35" width="5.16" height="5.16" fill="rgb(15,15,15)"/><rect x="5.06" y="106.35" width="5.16" height="5.16" fill="rgb(13,13,13)"/><rect x="15.19" y="106.35" width="5.16" height="5.16" fill="rgb(17,17,17)"/><rect x="20.26" y="106.35" width="5.16" height="5.16" fill="rgb(13,13,13)"/><rect x="35.45" y="106.35" width="5.16" height="5.16" fill="rgb(15,15,15)"/><rect x="40.52" y="106.35" width="5.16" height="5.16" fill="rgb(17,17,17)"/><rect x="45.58" y="106.35" width="5.16" height="5.16" fill="rgb(17,17,17)"/><rect x="50.65" y="106.35" width="5.16" height="5.16" fill="rgb(12,12,12)"/><rect x="65.84" y="106.35" width="5.16" height="5.16" fill="rgb(12,12,12)"/><rect x="70.90" y="106.35" width="5.16" height="5.16" fill="rgb(11,11,11)"/><rect x="81.03" y="106.35" width="5.16" height="5.16" fill="rgb(12,12,12)"/><rect x="86.10" y="106.35" width="5.16" height="5.16" fill="rgb(17,17,17)"/><rect x="91.16" y="106.35" width="5.16" height="5.16" fill="rgb(13,13,13)"/><rect x="96.23" y="106.35" width="5.16" height="5.16" fill="rgb(12,12,12)"/><rect x="101.29" y="106.35" width="5.16" height="5.16" fill="rgb(10,10,10)"/><rect x="106.35" y="106.35" width="5.16" height="5.16" fill="rgb(11,11,11)"/><rect x="111.42" y="106.35" width="5.16" height="5.16" fill="rgb(13,13,13)"/><rect x="116.48" y="106.35" width="5.16" height="5.16" fill="rgb(13,13,13)"/><rect x="121.55" y="106.35" width="5.16" height="5.16" fill="rgb(13,13,13)"/><rect x="131.68" y="106.35" width="5.16" height="5.16" fill="rgb(13,13,13)"/><rect x="136.74" y="106.35" width="5.16" height="5.16" fill="rgb(17,17,17)"/><rect x="141.81" y="106.35" width="5.16" height="5.16" fill="rgb(12,12,12)"/><rect x="146.87" y="106.35" width="5.16" height="5.16" fill="rgb(17,17,17)"/><rect x="151.94" y="106.35" width="5.16" height="5.16" fill="rgb(12,12,12)"/><rect x="0.00" y="111.42" width="5.16" height="5.16" fill="rgb(17,17,17)"/><rect x="5.06" y="111.42" width="5.16" height="5.16" fill="rgb(13,13,13)"/><rect x="10.13" y="111.42" width="5.16" height="5.16" fill="rgb(11,11,11)"/><rect x="15.19" y="111.42" width="5.16" height="5.16" fill="rgb(15,15,15)"/><rect x="20.26" y="111.42" width="5.16" height="5.16" fill="rgb(11,11,11)"/><rect x="30.39" y="111.42" width="5.16" height="5.16" fill="rgb(13,13,13)"/><rect x="35.45" y="111.42" width="5.16" height="5.16" fill="rgb(13,13,13)"/><rect x="45.58" y="111.42" width="5.16" height="5.16" fill="rgb(13,13,13)"/><rect x="50.65" y="111.42" width="5.16" height="5.16" fill="rgb(15,15,15)"/><rect x="55.71" y="111.42" width="5.16" height="5.16" fill="rgb(15,15,15)"/><rect x="60.77" y="111.42" width="5.16" height="5.16" fill="rgb(11,11,11)"/><rect x="65.84" y="111.42" width="5.16" height="5.16" fill="rgb(13,13,13)"/><rect x="70.90" y="111.42" width="5.16" height="5.16" fill="rgb(15,15,15)"/><rect x="75.97" y="111.42" width="5.16" height="5.16" fill="rgb(10,10,10)"/><rect x="81.03" y="111.42" width="5.16" height="5.16" fill="rgb(10,10,10)"/><rect x="86.10" y="111.42" width="5.16" height="5.16" fill="rgb(10,10,10)"/><rect x="96.23" y="111.42" width="5.16" height="5.16" fill="rgb(17,17,17)"/><rect x="101.29" y="111.42" width="5.16" height="5.16" fill="rgb(12,12,12)"/><rect x="111.42" y="111.42" width="5.16" height="5.16" fill="rgb(11,11,11)"/><rect x="121.55" y="111.42" width="5.16" height="5.16" fill="rgb(10,10,10)"/><rect x="126.61" y="111.42" width="5.16" height="5.16" fill="rgb(12,12,12)"/><rect x="136.74" y="111.42" width="5.16" height="5.16" fill="rgb(15,15,15)"/><rect x="146.87" y="111.42" width="5.16" height="5.16" fill="rgb(12,12,12)"/><rect x="0.00" y="116.48" width="5.16" height="5.16" fill="rgb(13,13,13)"/><rect x="10.13" y="116.48" width="5.16" height="5.16" fill="rgb(12,12,12)"/><rect x="20.26" y="116.48" width="5.16" height="5.16" fill="rgb(13,13,13)"/><rect x="35.45" y="116.48" width="5.16" height="5.16" fill="rgb(10,10,10)"/><rect x="45.58" y="116.48" width="5.16" height="5.16" fill="rgb(15,15,15)"/><rect x="50.65" y="116.48" width="5.16" height="5.16" fill="rgb(11,11,11)"/><rect x="55.71" y="116.48" width="5.16" height="5.16" fill="rgb(11,11,11)"/><rect x="60.77" y="116.48" width="5.16" height="5.16" fill="rgb(17,17,17)"/><rect x="65.84" y="116.48" width="5.16" height="5.16" fill="rgb(13,13,13)"/><rect x="70.90" y="116.48" width="5.16" height="5.16" fill="rgb(17,17,17)"/><rect x="75.97" y="116.48" width="5.16" height="5.16" fill="rgb(15,15,15)"/><rect x="81.03" y="116.48" width="5.16" height="5.16" fill="rgb(13,13,13)"/><rect x="86.10" y="116.48" width="5.16" height="5.16" fill="rgb(13,13,13)"/><rect x="91.16" y="116.48" width="5.16" height="5.16" fill="rgb(13,13,13)"/><rect x="96.23" y="116.48" width="5.16" height="5.16" fill="rgb(10,10,10)"/><rect x="101.29" y="116.48" width="5.16" height="5.16" fill="rgb(17,17,17)"/><rect x="106.35" y="116.48" width="5.16" height="5.16" fill="rgb(17,17,17)"/><rect x="121.55" y="116.48" width="5.16" height="5.16" fill="rgb(15,15,15)"/><rect x="126.61" y="116.48" width="5.16" height="5.16" fill="rgb(13,13,13)"/><rect x="136.74" y="116.48" width="5.16" height="5.16" fill="rgb(15,15,15)"/><rect x="146.87" y="116.48" width="5.16" height="5.16" fill="rgb(17,17,17)"/><rect x="0.00" y="121.55" width="5.16" height="5.16" fill="rgb(13,13,13)"/><rect x="15.19" y="121.55" width="5.16" height="5.16" fill="rgb(15,15,15)"/><rect x="20.26" y="121.55" width="5.16" height="5.16" fill="rgb(15,15,15)"/><rect x="25.32" y="121.55" width="5.16" height="5.16" fill="rgb(10,10,10)"/><rect x="30.39" y="121.55" width="5.16" height="5.16" fill="rgb(11,11,11)"/><rect x="35.45" y="121.55" width="5.16" height="5.16" fill="rgb(10,10,10)"/><rect x="40.52" y="121.55" width="5.16" height="5.16" fill="rgb(15,15,15)"/><rect x="45.58" y="121.55" width="5.16" height="5.16" fill="rgb(10,10,10)"/><rect x="50.65" y="121.55" width="5.16" height="5.16" fill="rgb(13,13,13)"/><rect x="55.71" y="121.55" width="5.16" height="5.16" fill="rgb(11,11,11)"/><rect x="60.77" y="121.55" width="5.16" height="5.16" fill="rgb(15,15,15)"/><rect x="65.84" y="121.55" width="5.16" height="5.16" fill="rgb(15,15,15)"/><rect x="70.90" y="121.55" width="5.16" height="5.16" fill="rgb(12,12,12)"/><rect x="75.97" y="121.55" width="5.16" height="5.16" fill="rgb(12,12,12)"/><rect x="86.10" y="121.55" width="5.16" height="5.16" fill="rgb(17,17,17)"/><rect x="91.16" y="121.55" width="5.16" height="5.16" fill="rgb(12,12,12)"/><rect x="101.29" y="121.55" width="5.16" height="5.16" fill="rgb(12,12,12)"/><rect x="106.35" y="121.55" width="5.16" height="5.16" fill="rgb(10,10,10)"/><rect x="111.42" y="121.55" width="5.16" height="5.16" fill="rgb(10,10,10)"/><rect x="121.55" y="121.55" width="5.16" height="5.16" fill="rgb(17,17,17)"/><rect x="131.68" y="121.55" width="5.16" height="5.16" fill="rgb(17,17,17)"/><rect x="141.81" y="121.55" width="5.16" height="5.16" fill="rgb(13,13,13)"/><rect x="151.94" y="121.55" width="5.16" height="5.16" fill="rgb(11,11,11)"/><rect x="0.00" y="126.61" width="5.16" height="5.16" fill="rgb(10,10,10)"/><rect x="5.06" y="126.61" width="5.16" height="5.16" fill="rgb(13,13,13)"/><rect x="10.13" y="126.61" width="5.16" height="5.16" fill="rgb(11,11,11)"/><rect x="15.19" y="126.61" width="5.16" height="5.16" fill="rgb(11,11,11)"/><rect x="20.26" y="126.61" width="5.16" height="5.16" fill="rgb(17,17,17)"/><rect x="25.32" y="126.61" width="5.16" height="5.16" fill="rgb(11,11,11)"/><rect x="30.39" y="126.61" width="5.16" height="5.16" fill="rgb(17,17,17)"/><rect x="35.45" y="126.61" width="5.16" height="5.16" fill="rgb(10,10,10)"/><rect x="40.52" y="126.61" width="5.16" height="5.16" fill="rgb(12,12,12)"/><rect x="45.58" y="126.61" width="5.16" height="5.16" fill="rgb(15,15,15)"/><rect x="50.65" y="126.61" width="5.16" height="5.16" fill="rgb(10,10,10)"/><rect x="55.71" y="126.61" width="5.16" height="5.16" fill="rgb(12,12,12)"/><rect x="60.77" y="126.61" width="5.16" height="5.16" fill="rgb(17,17,17)"/><rect x="65.84" y="126.61" width="5.16" height="5.16" fill="rgb(12,12,12)"/><rect x="70.90" y="126.61" width="5.16" height="5.16" fill="rgb(17,17,17)"/><rect x="75.97" y="126.61" width="5.16" height="5.16" fill="rgb(15,15,15)"/><rect x="81.03" y="126.61" width="5.16" height="5.16" fill="rgb(13,13,13)"/><rect x="91.16" y="126.61" width="5.16" height="5.16" fill="rgb(17,17,17)"/><rect x="96.23" y="126.61" width="5.16" height="5.16" fill="rgb(11,11,11)"/><rect x="101.29" y="126.61" width="5.16" height="5.16" fill="rgb(15,15,15)"/><rect x="111.42" y="126.61" width="5.16" height="5.16" fill="rgb(11,11,11)"/><rect x="116.48" y="126.61" width="5.16" height="5.16" fill="rgb(10,10,10)"/><rect x="121.55" y="126.61" width="5.16" height="5.16" fill="rgb(15,15,15)"/><rect x="126.61" y="126.61" width="5.16" height="5.16" fill="rgb(12,12,12)"/><rect x="136.74" y="126.61" width="5.16" height="5.16" fill="rgb(11,11,11)"/><rect x="146.87" y="126.61" width="5.16" height="5.16" fill="rgb(17,17,17)"/><rect x="151.94" y="126.61" width="5.16" height="5.16" fill="rgb(13,13,13)"/><rect x="0.00" y="131.68" width="5.16" height="5.16" fill="rgb(17,17,17)"/><rect x="5.06" y="131.68" width="5.16" height="5.16" fill="rgb(11,11,11)"/><rect x="10.13" y="131.68" width="5.16" height="5.16" fill="rgb(15,15,15)"/><rect x="15.19" y="131.68" width="5.16" height="5.16" fill="rgb(10,10,10)"/><rect x="20.26" y="131.68" width="5.16" height="5.16" fill="rgb(15,15,15)"/><rect x="25.32" y="131.68" width="5.16" height="5.16" fill="rgb(10,10,10)"/><rect x="30.39" y="131.68" width="5.16" height="5.16" fill="rgb(13,13,13)"/><rect x="35.45" y="131.68" width="5.16" height="5.16" fill="rgb(10,10,10)"/><rect x="40.52" y="131.68" width="5.16" height="5.16" fill="rgb(12,12,12)"/><rect x="45.58" y="131.68" width="5.16" height="5.16" fill="rgb(10,10,10)"/><rect x="50.65" y="131.68" width="5.16" height="5.16" fill="rgb(12,12,12)"/><rect x="60.77" y="131.68" width="5.16" height="5.16" fill="rgb(10,10,10)"/><rect x="65.84" y="131.68" width="5.16" height="5.16" fill="rgb(10,10,10)"/><rect x="75.97" y="131.68" width="5.16" height="5.16" fill="rgb(11,11,11)"/><rect x="81.03" y="131.68" width="5.16" height="5.16" fill="rgb(10,10,10)"/><rect x="86.10" y="131.68" width="5.16" height="5.16" fill="rgb(10,10,10)"/><rect x="96.23" y="131.68" width="5.16" height="5.16" fill="rgb(13,13,13)"/><rect x="101.29" y="131.68" width="5.16" height="5.16" fill="rgb(12,12,12)"/><rect x="111.42" y="131.68" width="5.16" height="5.16" fill="rgb(17,17,17)"/><rect x="116.48" y="131.68" width="5.16" height="5.16" fill="rgb(17,17,17)"/><rect x="126.61" y="131.68" width="5.16" height="5.16" fill="rgb(12,12,12)"/><rect x="136.74" y="131.68" width="5.16" height="5.16" fill="rgb(11,11,11)"/><rect x="141.81" y="131.68" width="5.16" height="5.16" fill="rgb(15,15,15)"/><rect x="146.87" y="131.68" width="5.16" height="5.16" fill="rgb(11,11,11)"/><rect x="0.00" y="136.74" width="5.16" height="5.16" fill="rgb(17,17,17)"/><rect x="5.06" y="136.74" width="5.16" height="5.16" fill="rgb(11,11,11)"/><rect x="15.19" y="136.74" width="5.16" height="5.16" fill="rgb(15,15,15)"/><rect x="20.26" y="136.74" width="5.16" height="5.16" fill="rgb(17,17,17)"/><rect x="25.32" y="136.74" width="5.16" height="5.16" fill="rgb(10,10,10)"/><rect x="30.39" y="136.74" width="5.16" height="5.16" fill="rgb(12,12,12)"/><rect x="35.45" y="136.74" width="5.16" height="5.16" fill="rgb(13,13,13)"/><rect x="40.52" y="136.74" width="5.16" height="5.16" fill="rgb(12,12,12)"/><rect x="45.58" y="136.74" width="5.16" height="5.16" fill="rgb(15,15,15)"/><rect x="55.71" y="136.74" width="5.16" height="5.16" fill="rgb(12,12,12)"/><rect x="60.77" y="136.74" width="5.16" height="5.16" fill="rgb(17,17,17)"/><rect x="70.90" y="136.74" width="5.16" height="5.16" fill="rgb(13,13,13)"/><rect x="81.03" y="136.74" width="5.16" height="5.16" fill="rgb(10,10,10)"/><rect x="91.16" y="136.74" width="5.16" height="5.16" fill="rgb(15,15,15)"/><rect x="96.23" y="136.74" width="5.16" height="5.16" fill="rgb(17,17,17)"/><rect x="106.35" y="136.74" width="5.16" height="5.16" fill="rgb(17,17,17)"/><rect x="116.48" y="136.74" width="5.16" height="5.16" fill="rgb(15,15,15)"/><rect x="121.55" y="136.74" width="5.16" height="5.16" fill="rgb(17,17,17)"/><rect x="126.61" y="136.74" width="5.16" height="5.16" fill="rgb(11,11,11)"/><rect x="131.68" y="136.74" width="5.16" height="5.16" fill="rgb(12,12,12)"/><rect x="141.81" y="136.74" width="5.16" height="5.16" fill="rgb(17,17,17)"/><rect x="151.94" y="136.74" width="5.16" height="5.16" fill="rgb(11,11,11)"/><rect x="0.00" y="141.81" width="5.16" height="5.16" fill="rgb(10,10,10)"/><rect x="5.06" y="141.81" width="5.16" height="5.16" fill="rgb(12,12,12)"/><rect x="10.13" y="141.81" width="5.16" height="5.16" fill="rgb(15,15,15)"/><rect x="15.19" y="141.81" width="5.16" height="5.16" fill="rgb(12,12,12)"/><rect x="20.26" y="141.81" width="5.16" height="5.16" fill="rgb(13,13,13)"/><rect x="25.32" y="141.81" width="5.16" height="5.16" fill="rgb(15,15,15)"/><rect x="35.45" y="141.81" width="5.16" height="5.16" fill="rgb(12,12,12)"/><rect x="40.52" y="141.81" width="5.16" height="5.16" fill="rgb(11,11,11)"/><rect x="45.58" y="141.81" width="5.16" height="5.16" fill="rgb(11,11,11)"/><rect x="50.65" y="141.81" width="5.16" height="5.16" fill="rgb(15,15,15)"/><rect x="60.77" y="141.81" width="5.16" height="5.16" fill="rgb(13,13,13)"/><rect x="65.84" y="141.81" width="5.16" height="5.16" fill="rgb(12,12,12)"/><rect x="70.90" y="141.81" width="5.16" height="5.16" fill="rgb(12,12,12)"/><rect x="75.97" y="141.81" width="5.16" height="5.16" fill="rgb(17,17,17)"/><rect x="81.03" y="141.81" width="5.16" height="5.16" fill="rgb(13,13,13)"/><rect x="86.10" y="141.81" width="5.16" height="5.16" fill="rgb(17,17,17)"/><rect x="91.16" y="141.81" width="5.16" height="5.16" fill="rgb(15,15,15)"/><rect x="106.35" y="141.81" width="5.16" height="5.16" fill="rgb(10,10,10)"/><rect x="116.48" y="141.81" width="5.16" height="5.16" fill="rgb(10,10,10)"/><rect x="121.55" y="141.81" width="5.16" height="5.16" fill="rgb(10,10,10)"/><rect x="126.61" y="141.81" width="5.16" height="5.16" fill="rgb(10,10,10)"/><rect x="131.68" y="141.81" width="5.16" height="5.16" fill="rgb(11,11,11)"/><rect x="136.74" y="141.81" width="5.16" height="5.16" fill="rgb(15,15,15)"/><rect x="146.87" y="141.81" width="5.16" height="5.16" fill="rgb(17,17,17)"/><rect x="5.06" y="146.87" width="5.16" height="5.16" fill="rgb(11,11,11)"/><rect x="15.19" y="146.87" width="5.16" height="5.16" fill="rgb(10,10,10)"/><rect x="25.32" y="146.87" width="5.16" height="5.16" fill="rgb(15,15,15)"/><rect x="30.39" y="146.87" width="5.16" height="5.16" fill="rgb(15,15,15)"/><rect x="40.52" y="146.87" width="5.16" height="5.16" fill="rgb(13,13,13)"/><rect x="45.58" y="146.87" width="5.16" height="5.16" fill="rgb(15,15,15)"/><rect x="50.65" y="146.87" width="5.16" height="5.16" fill="rgb(10,10,10)"/><rect x="55.71" y="146.87" width="5.16" height="5.16" fill="rgb(11,11,11)"/><rect x="60.77" y="146.87" width="5.16" height="5.16" fill="rgb(10,10,10)"/><rect x="65.84" y="146.87" width="5.16" height="5.16" fill="rgb(15,15,15)"/><rect x="70.90" y="146.87" width="5.16" height="5.16" fill="rgb(17,17,17)"/><rect x="75.97" y="146.87" width="5.16" height="5.16" fill="rgb(13,13,13)"/><rect x="81.03" y="146.87" width="5.16" height="5.16" fill="rgb(15,15,15)"/><rect x="91.16" y="146.87" width="5.16" height="5.16" fill="rgb(15,15,15)"/><rect x="96.23" y="146.87" width="5.16" height="5.16" fill="rgb(13,13,13)"/><rect x="101.29" y="146.87" width="5.16" height="5.16" fill="rgb(11,11,11)"/><rect x="111.42" y="146.87" width="5.16" height="5.16" fill="rgb(12,12,12)"/><rect x="116.48" y="146.87" width="5.16" height="5.16" fill="rgb(13,13,13)"/><rect x="121.55" y="146.87" width="5.16" height="5.16" fill="rgb(11,11,11)"/><rect x="126.61" y="146.87" width="5.16" height="5.16" fill="rgb(13,13,13)"/><rect x="131.68" y="146.87" width="5.16" height="5.16" fill="rgb(12,12,12)"/><rect x="136.74" y="146.87" width="5.16" height="5.16" fill="rgb(17,17,17)"/><rect x="146.87" y="146.87" width="5.16" height="5.16" fill="rgb(15,15,15)"/><rect x="151.94" y="146.87" width="5.16" height="5.16" fill="rgb(11,11,11)"/><rect x="0.00" y="151.94" width="5.16" height="5.16" fill="rgb(13,13,13)"/><rect x="5.06" y="151.94" width="5.16" height="5.16" fill="rgb(12,12,12)"/><rect x="15.19" y="151.94" width="5.16" height="5.16" fill="rgb(10,10,10)"/><rect x="20.26" y="151.94" width="5.16" height="5.16" fill="rgb(12,12,12)"/><rect x="25.32" y="151.94" width="5.16" height="5.16" fill="rgb(12,12,12)"/><rect x="30.39" y="151.94" width="5.16" height="5.16" fill="rgb(11,11,11)"/><rect x="35.45" y="151.94" width="5.16" height="5.16" fill="rgb(13,13,13)"/><rect x="40.52" y="151.94" width="5.16" height="5.16" fill="rgb(10,10,10)"/><rect x="45.58" y="151.94" width="5.16" height="5.16" fill="rgb(11,11,11)"/><rect x="50.65" y="151.94" width="5.16" height="5.16" fill="rgb(11,11,11)"/><rect x="60.77" y="151.94" width="5.16" height="5.16" fill="rgb(11,11,11)"/><rect x="70.90" y="151.94" width="5.16" height="5.16" fill="rgb(10,10,10)"/><rect x="75.97" y="151.94" width="5.16" height="5.16" fill="rgb(11,11,11)"/><rect x="81.03" y="151.94" width="5.16" height="5.16" fill="rgb(17,17,17)"/><rect x="86.10" y="151.94" width="5.16" height="5.16" fill="rgb(15,15,15)"/><rect x="91.16" y="151.94" width="5.16" height="5.16" fill="rgb(13,13,13)"/><rect x="96.23" y="151.94" width="5.16" height="5.16" fill="rgb(13,13,13)"/><rect x="106.35" y="151.94" width="5.16" height="5.16" fill="rgb(13,13,13)"/><rect x="111.42" y="151.94" width="5.16" height="5.16" fill="rgb(12,12,12)"/><rect x="116.48" y="151.94" width="5.16" height="5.16" fill="rgb(17,17,17)"/><rect x="126.61" y="151.94" width="5.16" height="5.16" fill="rgb(17,17,17)"/><rect x="131.68" y="151.94" width="5.16" height="5.16" fill="rgb(10,10,10)"/><rect x="136.74" y="151.94" width="5.16" height="5.16" fill="rgb(11,11,11)"/><rect x="146.87" y="151.94" width="5.16" height="5.16" fill="rgb(12,12,12)"/><rect x="151.94" y="151.94" width="5.16" height="5.16" fill="rgb(10,10,10)"/><g transform="translate(1,2)"><rect x="70.90" y="60.77" width="5.16" height="5.16" fill="rgb(45,45,45)"/><rect x="75.97" y="60.77" width="5.16" height="5.16" fill="rgb(50,50,50)"/><rect x="81.03" y="60.77" width="5.16" height="5.16" fill="rgb(45,45,45)"/><rect x="65.84" y="65.84" width="5.16" height="5.16" fill="rgb(50,50,50)"/><rect x="70.90" y="65.84" width="5.16" height="5.16" fill="rgb(120,120,120)"/><rect x="75.97" y="65.84" width="5.16" height="5.16" fill="rgb(130,130,130)"/><rect x="81.03" y="65.84" width="5.16" height="5.16" fill="rgb(110,110,110)"/><rect x="86.10" y="65.84" width="5.16" height="5.16" fill="rgb(50,50,50)"/><rect x="60.77" y="70.90" width="5.16" height="5.16" fill="rgb(30,30,30)"/><rect x="65.84" y="70.90" width="5.16" height="5.16" fill="rgb(90,90,90)"/><rect x="70.90" y="70.90" width="5.16" height="5.16" fill="rgb(200,200,200)"/><rect x="75.97" y="70.90" width="5.16" height="5.16" fill="rgb(225,225,225)"/><rect x="81.03" y="70.90" width="5.16" height="5.16" fill="rgb(200,200,200)"/><rect x="86.10" y="70.90" width="5.16" height="5.16" fill="rgb(90,90,90)"/><rect x="91.16" y="70.90" width="5.16" height="5.16" fill="rgb(30,30,30)"/><rect x="60.77" y="75.97" width="5.16" height="5.16" fill="rgb(35,35,35)"/><rect x="65.84" y="75.97" width="5.16" height="5.16" fill="rgb(110,110,110)"/><rect x="70.90" y="75.97" width="5.16" height="5.16" fill="rgb(230,230,230)"/><rect x="75.97" y="75.97" width="5.16" height="5.16" fill="rgb(255,255,255)"/><rect x="81.03" y="75.97" width="5.16" height="5.16" fill="rgb(235,235,235)"/><rect x="86.10" y="75.97" width="5.16" height="5.16" fill="rgb(110,110,110)"/><rect x="91.16" y="75.97" width="5.16" height="5.16" fill="rgb(35,35,35)"/><rect x="60.77" y="81.03" width="5.16" height="5.16" fill="rgb(30,30,30)"/><rect x="65.84" y="81.03" width="5.16" height="5.16" fill="rgb(100,100,100)"/><rect x="70.90" y="81.03" width="5.16" height="5.16" fill="rgb(210,210,210)"/><rect x="75.97" y="81.03" width="5.16" height="5.16" fill="rgb(250,250,250)"/><rect x="81.03" y="81.03" width="5.16" height="5.16" fill="rgb(215,215,215)"/><rect x="86.10" y="81.03" width="5.16" height="5.16" fill="rgb(90,90,90)"/><rect x="91.16" y="81.03" width="5.16" height="5.16" fill="rgb(30,30,30)"/><rect x="65.84" y="86.10" width="5.16" height="5.16" fill="rgb(50,50,50)"/><rect x="70.90" y="86.10" width="5.16" height="5.16" fill="rgb(140,140,140)"/><rect x="75.97" y="86.10" width="5.16" height="5.16" fill="rgb(160,160,160)"/><rect x="81.03" y="86.10" width="5.16" height="5.16" fill="rgb(140,140,140)"/><rect x="86.10" y="86.10" width="5.16" height="5.16" fill="rgb(50,50,50)"/><rect x="70.90" y="91.16" width="5.16" height="5.16" fill="rgb(60,60,60)"/><rect x="75.97" y="91.16" width="5.16" height="5.16" fill="rgb(65,65,65)"/><rect x="81.03" y="91.16" width="5.16" height="5.16" fill="rgb(60,60,60)"/><rect x="75.97" y="96.23" width="5.16" height="5.16" fill="rgb(30,30,30)"/></g></g><path d="M0 0L157 157M157 0L0 157" stroke="#a89e74" stroke-width="1" opacity=".8"/></svg>
</div>
<div class="a" style="left:881px;top:461px;width:157px;height:158px;background:#ffa500;overflow:hidden">
<svg width="157" height="158" style="position:absolute;left:0;top:0"><g style="filter:blur(.5px)"><rect x="70.90" y="65.84" width="5.16" height="5.16" fill="rgb(150,150,156)"/><rect x="75.97" y="65.84" width="5.16" height="5.16" fill="rgb(170,170,176)"/><rect x="81.03" y="65.84" width="5.16" height="5.16" fill="rgb(150,150,156)"/><rect x="65.84" y="70.90" width="5.16" height="5.16" fill="rgb(130,130,136)"/><rect x="70.90" y="70.90" width="5.16" height="5.16" fill="rgb(180,180,186)"/><rect x="75.97" y="70.90" width="5.16" height="5.16" fill="rgb(220,220,226)"/><rect x="81.03" y="70.90" width="5.16" height="5.16" fill="rgb(190,190,196)"/><rect x="86.10" y="70.90" width="5.16" height="5.16" fill="rgb(140,140,146)"/><rect x="60.77" y="75.97" width="5.16" height="5.16" fill="rgb(120,120,126)"/><rect x="65.84" y="75.97" width="5.16" height="5.16" fill="rgb(160,160,166)"/><rect x="70.90" y="75.97" width="5.16" height="5.16" fill="rgb(220,220,226)"/><rect x="75.97" y="75.97" width="5.16" height="5.16" fill="rgb(250,250,256)"/><rect x="81.03" y="75.97" width="5.16" height="5.16" fill="rgb(220,220,226)"/><rect x="86.10" y="75.97" width="5.16" height="5.16" fill="rgb(160,160,166)"/><rect x="91.16" y="75.97" width="5.16" height="5.16" fill="rgb(120,120,126)"/><rect x="60.77" y="81.03" width="5.16" height="5.16" fill="rgb(120,120,126)"/><rect x="65.84" y="81.03" width="5.16" height="5.16" fill="rgb(150,150,156)"/><rect x="70.90" y="81.03" width="5.16" height="5.16" fill="rgb(215,215,221)"/><rect x="75.97" y="81.03" width="5.16" height="5.16" fill="rgb(252,252,258)"/><rect x="81.03" y="81.03" width="5.16" height="5.16" fill="rgb(210,210,216)"/><rect x="86.10" y="81.03" width="5.16" height="5.16" fill="rgb(150,150,156)"/><rect x="91.16" y="81.03" width="5.16" height="5.16" fill="rgb(120,120,126)"/><rect x="60.77" y="86.10" width="5.16" height="5.16" fill="rgb(110,110,116)"/><rect x="65.84" y="86.10" width="5.16" height="5.16" fill="rgb(140,140,146)"/><rect x="70.90" y="86.10" width="5.16" height="5.16" fill="rgb(190,190,196)"/><rect x="75.97" y="86.10" width="5.16" height="5.16" fill="rgb(200,200,206)"/><rect x="81.03" y="86.10" width="5.16" height="5.16" fill="rgb(180,180,186)"/><rect x="86.10" y="86.10" width="5.16" height="5.16" fill="rgb(140,140,146)"/><rect x="91.16" y="86.10" width="5.16" height="5.16" fill="rgb(110,110,116)"/><rect x="65.84" y="91.16" width="5.16" height="5.16" fill="rgb(120,120,126)"/><rect x="70.90" y="91.16" width="5.16" height="5.16" fill="rgb(150,150,156)"/><rect x="75.97" y="91.16" width="5.16" height="5.16" fill="rgb(160,160,166)"/><rect x="81.03" y="91.16" width="5.16" height="5.16" fill="rgb(150,150,156)"/><rect x="86.10" y="91.16" width="5.16" height="5.16" fill="rgb(120,120,126)"/><rect x="70.90" y="96.23" width="5.16" height="5.16" fill="rgb(115,115,121)"/><rect x="75.97" y="96.23" width="5.16" height="5.16" fill="rgb(130,130,136)"/><rect x="81.03" y="96.23" width="5.16" height="5.16" fill="rgb(115,115,121)"/></g></svg>
</div>
<div class="t" style="left:570px;top:631px">target</div>
<div class="t" style="left:885px;top:631px">Thumbnail Two (right-click here for info)</div>


<!-- dialog -->
<div class="a" style="left:157px;top:168px;width:360px;height:317px;background:#ececec;border:1px solid #cdcdcd;border-radius:5px;box-shadow:0 2px 8px rgba(0,0,0,.13);overflow:hidden">
<div class="a" style="left:0;top:0;width:358px;height:18px;background:#e6e6e6;border-bottom:1px solid #d4d4d4"></div>
<div class="a" style="left:3.0999999999999996px;top:6px;width:7px;height:7px;border-radius:50%;background:#d6d6d6;border:1px solid #c6c6c6"></div>
<div class="a" style="left:15.0px;top:6px;width:7px;height:7px;border-radius:50%;background:#d6d6d6;border:1px solid #c6c6c6"></div>
<div class="a" style="left:26.5px;top:6px;width:7px;height:7px;border-radius:50%;background:#d6d6d6;border:1px solid #c6c6c6"></div>
<div class="t b" style="left:109.5px;top:3px;color:#acacac;font-size:8.2px">Aperture properties (view and edit)</div>
</div>
<div class="a" style="left:163px;top:193px;width:348px;height:286px;background:#fff;border:1px solid #d6d6d6"></div>
<div class="a" style="left:164px;top:194px;width:346px;height:10px;background:#f3f3f3;border-bottom:1px solid #d0d0d0"></div>
<div class="t" style="left:170.5px;top:191.5px;width:60.0px;text-align:center;font-size:7px;color:#333;overflow:hidden">name</div>
<div class="t" style="left:230.5px;top:191.5px;width:60.5px;text-align:center;font-size:7px;color:#333;overflow:hidden">x,y</div>
<div class="t" style="left:291px;top:191.5px;width:60px;text-align:center;font-size:7px;color:#333;overflow:hidden">thresh</div>
<div class="t" style="left:351px;top:191.5px;width:60.5px;text-align:center;font-size:7px;color:#333;overflow:hidden">def mask radius</div>
<div class="t" style="left:411.5px;top:191.5px;width:60.0px;text-align:center;font-size:7px;color:#333;overflow:hidden">color</div>
<div class="t" style="left:488.5px;top:191.5px;font-size:7px;color:#333">joggab</div>
<div class="a" style="left:164px;top:204px;width:346px;height:18px;background:#fff;border-bottom:1px solid #e2e2e2"></div>
<div class="t" style="left:165px;top:206.5px;font-size:7.5px;color:#666">1</div>
<div class="t" style="left:172.5px;top:207px">target</div>
<div class="t" style="left:232.5px;top:207px">(368,136)</div>
<div class="t" style="left:293px;top:207px">99999</div>
<div class="t" style="left:353px;top:207px">3.2</div>
<div class="t" style="left:413.5px;top:207px">green (conne...</div>
<div class="t" style="left:473.5px;top:207px">False</div>
<div class="a" style="left:164px;top:222px;width:346px;height:18px;background:#f4f4f4;border-bottom:1px solid #e2e2e2"></div>
<div class="t" style="left:165px;top:224.5px;font-size:7.5px;color:#666">2</div>
<div class="t" style="left:172.5px;top:225px">no_star</div>
<div class="t" style="left:232.5px;top:225px">(369,184)</div>
<div class="t" style="left:293px;top:225px">99999</div>
<div class="t" style="left:353px;top:225px">3.2</div>
<div class="t" style="left:413.5px;top:225px">red (standard)</div>
<div class="t" style="left:473.5px;top:225px">False</div>
<div class="a" style="left:164px;top:240px;width:346px;height:18px;background:#fff;border-bottom:1px solid #e2e2e2"></div>
<div class="t" style="left:165px;top:242.5px;font-size:7.5px;color:#666">3</div>
<div class="t" style="left:172.5px;top:243px">tracking1</div>
<div class="t" style="left:232.5px;top:243px">(205,153)</div>
<div class="t" style="left:293px;top:243px">99999</div>
<div class="t" style="left:353px;top:243px">3.2</div>
<div class="t" style="left:413.5px;top:243px">yellow ...</div>
<div class="t" style="left:473.5px;top:243px">False</div>
<div class="a" style="left:164px;top:258px;width:346px;height:18px;background:#f4f4f4;border-bottom:1px solid #e2e2e2"></div>
<div class="t" style="left:165px;top:260.5px;font-size:7.5px;color:#666">4</div>
<div class="t" style="left:172.5px;top:261px">tracking2</div>
<div class="t" style="left:232.5px;top:261px">(402,346)</div>
<div class="t" style="left:293px;top:261px">99999</div>
<div class="t" style="left:353px;top:261px">3.2</div>
<div class="t" style="left:413.5px;top:261px">yellow ...</div>
<div class="t" style="left:473.5px;top:261px">True</div>
<div class="a" style="left:170px;top:194px;width:1px;height:82px;background:#dedede"></div>
<div class="a" style="left:230px;top:194px;width:1px;height:82px;background:#dedede"></div>
<div class="a" style="left:291px;top:194px;width:1px;height:82px;background:#dedede"></div>
<div class="a" style="left:351px;top:194px;width:1px;height:82px;background:#dedede"></div>
<div class="a" style="left:411px;top:194px;width:1px;height:82px;background:#dedede"></div>
<div class="a" style="left:471px;top:194px;width:1px;height:82px;background:#dedede"></div>
<div class="a" style="left:164px;top:469px;width:346px;height:9px;background:#f4f4f4;border-top:1px solid #e0e0e0"></div>
<div class="a" style="left:355px;top:470px;width:150px;height:8px;background:#dadada"></div>
<div class="t" style="left:166px;top:467px;font-size:5px;color:#444">&#9664;</div>
<div class="t" style="left:505px;top:467px;font-size:5px;color:#444">&#9654;</div>
</body></html>
